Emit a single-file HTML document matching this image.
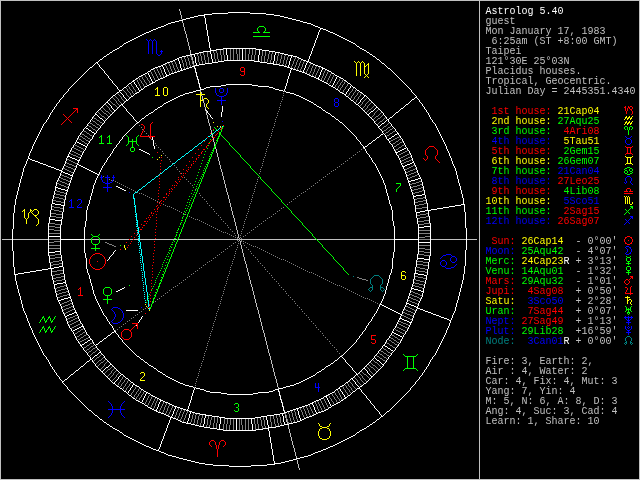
<!DOCTYPE html>
<html><head><meta charset="utf-8"><style>
html,body{margin:0;padding:0;background:#000;width:640px;height:480px;overflow:hidden}
.t{position:absolute;left:0;top:0;width:640px;height:480px;will-change:transform}
.l{position:absolute;left:485.5px;font-family:"Liberation Mono",monospace;font-size:10px;line-height:10px;white-space:pre;height:10px}
</style></head><body>
<svg width="640" height="480" viewBox="0 0 640 480" shape-rendering="crispEdges" style="position:absolute;left:0;top:0">
<path fill="none" stroke="#c0c0c0" stroke-width="1" transform="translate(0,.5)" d="M0 0h640M0 1h1M479 1h1M639 1h1M0 2h1M479 2h1M639 2h1M0 3h1M479 3h1M639 3h1M0 4h1M479 4h1M639 4h1M0 5h1M479 5h1M639 5h1M0 6h1M479 6h1M639 6h1M0 7h1M479 7h1M639 7h1M0 8h1M479 8h1M639 8h1M0 9h1M179 9h1M479 9h1M639 9h1M0 10h1M179 10h1M479 10h1M639 10h1M0 11h1M180 11h1M479 11h1M639 11h1M0 12h1M180 12h1M479 12h1M639 12h1M0 13h1M180 13h1M479 13h1M639 13h1M0 14h1M180 14h1M479 14h1M639 14h1M0 15h1M181 15h1M479 15h1M639 15h1M0 16h1M181 16h1M479 16h1M639 16h1M0 17h1M181 17h1M479 17h1M639 17h1M0 18h1M181 18h1M479 18h1M639 18h1M0 19h1M182 19h1M479 19h1M639 19h1M0 20h1M479 20h1M639 20h1M0 21h1M182 21h1M479 21h1M639 21h1M0 22h1M182 22h1M479 22h1M639 22h1M0 23h1M183 23h1M479 23h1M639 23h1M0 24h1M183 24h1M479 24h1M639 24h1M0 25h1M183 25h1M479 25h1M639 25h1M0 26h1M183 26h1M479 26h1M639 26h1M0 27h1M184 27h1M479 27h1M639 27h1M0 28h1M184 28h1M479 28h1M639 28h1M0 29h1M184 29h1M479 29h1M639 29h1M0 30h1M184 30h1M479 30h1M639 30h1M0 31h1M185 31h1M479 31h1M639 31h1M0 32h1M185 32h1M479 32h1M639 32h1M0 33h1M185 33h1M479 33h1M639 33h1M0 34h1M186 34h1M479 34h1M639 34h1M0 35h1M186 35h1M479 35h1M639 35h1M0 36h1M186 36h1M479 36h1M639 36h1M0 37h1M186 37h1M479 37h1M639 37h1M0 38h1M187 38h1M479 38h1M639 38h1M0 39h1M187 39h1M479 39h1M639 39h1M0 40h1M187 40h1M479 40h1M639 40h1M0 41h1M187 41h1M479 41h1M639 41h1M0 42h1M188 42h1M479 42h1M639 42h1M0 43h1M188 43h1M479 43h1M639 43h1M0 44h1M188 44h1M479 44h1M639 44h1M0 45h1M188 45h1M479 45h1M639 45h1M0 46h1M189 46h1M479 46h1M639 46h1M0 47h1M189 47h1M479 47h1M639 47h1M0 48h1M189 48h1M479 48h1M639 48h1M0 49h1M189 49h1M479 49h1M639 49h1M0 50h1M190 50h1M479 50h1M639 50h1M0 51h1M190 51h1M479 51h1M639 51h1M0 52h1M190 52h1M479 52h1M639 52h1M0 53h1M190 53h1M479 53h1M639 53h1M0 54h1M479 54h1M639 54h1M0 55h1M191 55h1M479 55h1M639 55h1M0 56h1M191 56h1M479 56h1M639 56h1M0 57h1M192 57h1M479 57h1M639 57h1M0 58h1M192 58h1M479 58h1M639 58h1M0 59h1M192 59h1M479 59h1M639 59h1M0 60h1M479 60h1M639 60h1M0 61h1M193 61h1M479 61h1M639 61h1M0 62h1M193 62h1M479 62h1M639 62h1M0 63h1M193 63h1M479 63h1M639 63h1M0 64h1M479 64h1M639 64h1M0 65h1M194 65h1M479 65h1M639 65h1M0 66h1M479 66h1M639 66h1M0 67h1M479 67h1M639 67h1M0 68h1M194 68h1M479 68h1M639 68h1M0 69h1M479 69h1M639 69h1M0 70h1M479 70h1M639 70h1M0 71h1M479 71h1M639 71h1M0 72h1M195 72h1M479 72h1M639 72h1M0 73h1M479 73h1M639 73h1M0 74h1M479 74h1M639 74h1M0 75h1M479 75h1M639 75h1M0 76h1M196 76h1M479 76h1M639 76h1M0 77h1M479 77h1M639 77h1M0 78h1M479 78h1M639 78h1M0 79h1M197 79h1M479 79h1M639 79h1M0 80h1M479 80h1M639 80h1M0 81h1M479 81h1M639 81h1M0 82h1M479 82h1M639 82h1M0 83h1M198 83h1M479 83h1M639 83h1M0 84h1M479 84h1M639 84h1M0 85h1M479 85h1M639 85h1M0 86h1M479 86h1M639 86h1M0 87h1M199 87h1M479 87h1M639 87h1M0 88h1M479 88h1M639 88h1M0 89h1M479 89h1M639 89h1M0 90h1M200 90h1M479 90h1M639 90h1M0 91h1M200 91h1M479 91h1M639 91h1M0 92h1M201 92h1M479 92h1M639 92h1M0 93h1M201 93h1M479 93h1M639 93h1M0 94h1M479 94h1M639 94h1M0 95h1M201 95h1M479 95h1M639 95h1M0 96h1M202 96h1M479 96h1M639 96h1M0 97h1M202 97h1M479 97h1M639 97h1M0 98h1M202 98h1M479 98h1M639 98h1M0 99h1M202 99h1M479 99h1M639 99h1M0 100h1M203 100h1M479 100h1M639 100h1M0 101h1M203 101h1M479 101h1M639 101h1M0 102h1M203 102h1M479 102h1M639 102h1M0 103h1M204 103h1M479 103h1M639 103h1M0 104h1M204 104h1M479 104h1M639 104h1M0 105h1M204 105h1M479 105h1M639 105h1M0 106h1M204 106h1M479 106h1M639 106h1M0 107h1M205 107h1M479 107h1M639 107h1M0 108h1M205 108h1M479 108h1M639 108h1M0 109h1M479 109h1M639 109h1M0 110h1M205 110h1M479 110h1M639 110h1M0 111h1M206 111h1M479 111h1M639 111h1M0 112h1M206 112h1M479 112h1M639 112h1M0 113h1M206 113h1M479 113h1M639 113h1M0 114h1M206 114h1M479 114h1M639 114h1M0 115h1M207 115h1M479 115h1M639 115h1M0 116h1M207 116h1M479 116h1M639 116h1M0 117h1M207 117h1M479 117h1M639 117h1M0 118h1M207 118h1M479 118h1M639 118h1M0 119h1M208 119h1M479 119h1M639 119h1M0 120h1M208 120h1M479 120h1M639 120h1M0 121h1M208 121h1M479 121h1M639 121h1M0 122h1M208 122h1M479 122h1M639 122h1M0 123h1M209 123h1M479 123h1M639 123h1M0 124h1M209 124h1M479 124h1M639 124h1M0 125h1M209 125h1M479 125h1M639 125h1M0 126h1M210 126h1M479 126h1M639 126h1M0 127h1M210 127h1M479 127h1M639 127h1M0 128h1M210 128h1M479 128h1M639 128h1M0 129h1M210 129h1M479 129h1M639 129h1M0 130h1M211 130h1M479 130h1M639 130h1M0 131h1M211 131h1M479 131h1M639 131h1M0 132h1M211 132h1M479 132h1M639 132h1M0 133h1M211 133h1M479 133h1M639 133h1M0 134h1M212 134h1M479 134h1M639 134h1M0 135h1M212 135h1M479 135h1M639 135h1M0 136h1M212 136h1M479 136h1M639 136h1M0 137h1M212 137h1M479 137h1M639 137h1M0 138h1M213 138h1M479 138h1M639 138h1M0 139h1M213 139h1M479 139h1M639 139h1M0 140h1M213 140h1M479 140h1M639 140h1M0 141h1M213 141h1M479 141h1M639 141h1M0 142h1M214 142h1M479 142h1M639 142h1M0 143h1M214 143h1M479 143h1M639 143h1M0 144h1M214 144h1M479 144h1M639 144h1M0 145h1M214 145h1M479 145h1M639 145h1M0 146h1M479 146h1M639 146h1M0 147h1M215 147h1M479 147h1M639 147h1M0 148h1M215 148h1M479 148h1M639 148h1M0 149h1M216 149h1M479 149h1M639 149h1M0 150h1M216 150h1M479 150h1M639 150h1M0 151h1M216 151h1M479 151h1M639 151h1M0 152h1M216 152h1M479 152h1M639 152h1M0 153h1M217 153h1M479 153h1M639 153h1M0 154h1M217 154h1M479 154h1M639 154h1M0 155h1M217 155h1M479 155h1M639 155h1M0 156h1M217 156h1M479 156h1M639 156h1M0 157h1M218 157h1M479 157h1M639 157h1M0 158h1M218 158h1M479 158h1M639 158h1M0 159h1M218 159h1M479 159h1M639 159h1M0 160h1M218 160h1M479 160h1M639 160h1M0 161h1M219 161h1M479 161h1M639 161h1M0 162h1M219 162h1M479 162h1M639 162h1M0 163h1M219 163h1M479 163h1M639 163h1M0 164h1M219 164h1M479 164h1M639 164h1M0 165h1M220 165h1M479 165h1M639 165h1M0 166h1M220 166h1M479 166h1M639 166h1M0 167h1M220 167h1M479 167h1M639 167h1M0 168h1M220 168h1M479 168h1M639 168h1M0 169h1M221 169h1M479 169h1M639 169h1M0 170h1M221 170h1M479 170h1M639 170h1M0 171h1M221 171h1M479 171h1M639 171h1M0 172h1M222 172h1M479 172h1M639 172h1M0 173h1M222 173h1M479 173h1M639 173h1M0 174h1M222 174h1M479 174h1M639 174h1M0 175h1M222 175h1M479 175h1M639 175h1M0 176h1M223 176h1M479 176h1M639 176h1M0 177h1M223 177h1M479 177h1M639 177h1M0 178h1M223 178h1M479 178h1M639 178h1M0 179h1M223 179h1M479 179h1M639 179h1M0 180h1M224 180h1M479 180h1M639 180h1M0 181h1M224 181h1M479 181h1M639 181h1M0 182h1M224 182h1M479 182h1M639 182h1M0 183h1M224 183h1M479 183h1M639 183h1M0 184h1M225 184h1M479 184h1M639 184h1M0 185h1M225 185h1M479 185h1M639 185h1M0 186h1M225 186h1M479 186h1M639 186h1M0 187h1M225 187h1M479 187h1M639 187h1M0 188h1M226 188h1M479 188h1M639 188h1M0 189h1M226 189h1M479 189h1M639 189h1M0 190h1M226 190h1M479 190h1M639 190h1M0 191h1M226 191h1M479 191h1M639 191h1M0 192h1M227 192h1M479 192h1M639 192h1M0 193h1M227 193h1M479 193h1M639 193h1M0 194h1M227 194h1M479 194h1M639 194h1M0 195h1M228 195h1M479 195h1M639 195h1M0 196h1M228 196h1M479 196h1M639 196h1M0 197h1M228 197h1M479 197h1M639 197h1M0 198h1M228 198h1M479 198h1M639 198h1M0 199h1M229 199h1M479 199h1M639 199h1M0 200h1M229 200h1M479 200h1M639 200h1M0 201h1M229 201h1M479 201h1M639 201h1M0 202h1M229 202h1M479 202h1M639 202h1M0 203h1M230 203h1M479 203h1M639 203h1M0 204h1M230 204h1M479 204h1M639 204h1M0 205h1M230 205h1M479 205h1M639 205h1M0 206h1M230 206h1M479 206h1M639 206h1M0 207h1M231 207h1M479 207h1M639 207h1M0 208h1M231 208h1M479 208h1M639 208h1M0 209h1M231 209h1M479 209h1M639 209h1M0 210h1M231 210h1M479 210h1M639 210h1M0 211h1M232 211h1M479 211h1M639 211h1M0 212h1M232 212h1M479 212h1M639 212h1M0 213h1M232 213h1M479 213h1M639 213h1M0 214h1M232 214h1M479 214h1M639 214h1M0 215h1M233 215h1M479 215h1M639 215h1M0 216h1M233 216h1M479 216h1M639 216h1M0 217h1M233 217h1M479 217h1M639 217h1M0 218h1M234 218h1M479 218h1M639 218h1M0 219h1M234 219h1M479 219h1M639 219h1M0 220h1M234 220h1M479 220h1M639 220h1M0 221h1M234 221h1M479 221h1M639 221h1M0 222h1M235 222h1M479 222h1M639 222h1M0 223h1M235 223h1M479 223h1M639 223h1M0 224h1M235 224h1M479 224h1M639 224h1M0 225h1M235 225h1M479 225h1M639 225h1M0 226h1M236 226h1M479 226h1M639 226h1M0 227h1M236 227h1M479 227h1M639 227h1M0 228h1M236 228h1M479 228h1M639 228h1M0 229h1M236 229h1M479 229h1M639 229h1M0 230h1M237 230h1M479 230h1M639 230h1M0 231h1M237 231h1M479 231h1M639 231h1M0 232h1M237 232h1M479 232h1M639 232h1M0 233h1M237 233h1M479 233h1M639 233h1M0 234h1M238 234h1M479 234h1M639 234h1M0 235h1M238 235h1M479 235h1M639 235h1M0 236h1M238 236h1M479 236h1M639 236h1M0 237h1M238 237h1M479 237h1M639 237h1M0 238h1M239 238h1M479 238h1M639 238h1M0 239h1M2 239h10M13 239h35M85 239h6M92 239h7M100 239h29M130 239h3M134 239h5M140 239h37M178 239h61M240 239h76M317 239h77M431 239h35M467 239h10M479 239h1M639 239h1M0 240h1M239 240h1M479 240h1M639 240h1M0 241h1M240 241h1M479 241h1M639 241h1M0 242h1M240 242h1M479 242h1M639 242h1M0 243h1M240 243h1M479 243h1M639 243h1M0 244h1M240 244h1M479 244h1M639 244h1M0 245h1M241 245h1M479 245h1M639 245h1M0 246h1M241 246h1M479 246h1M639 246h1M0 247h1M241 247h1M479 247h1M639 247h1M0 248h1M241 248h1M479 248h1M639 248h1M0 249h1M242 249h1M479 249h1M639 249h1M0 250h1M242 250h1M479 250h1M639 250h1M0 251h1M242 251h1M479 251h1M639 251h1M0 252h1M242 252h1M479 252h1M639 252h1M0 253h1M243 253h1M479 253h1M639 253h1M0 254h1M243 254h1M479 254h1M639 254h1M0 255h1M243 255h1M479 255h1M639 255h1M0 256h1M243 256h1M479 256h1M639 256h1M0 257h1M244 257h1M479 257h1M639 257h1M0 258h1M244 258h1M479 258h1M639 258h1M0 259h1M244 259h1M479 259h1M639 259h1M0 260h1M244 260h1M479 260h1M639 260h1M0 261h1M245 261h1M479 261h1M639 261h1M0 262h1M245 262h1M479 262h1M639 262h1M0 263h1M245 263h1M479 263h1M639 263h1M0 264h1M246 264h1M479 264h1M639 264h1M0 265h1M246 265h1M479 265h1M639 265h1M0 266h1M246 266h1M479 266h1M639 266h1M0 267h1M246 267h1M479 267h1M639 267h1M0 268h1M247 268h1M479 268h1M639 268h1M0 269h1M247 269h1M479 269h1M639 269h1M0 270h1M247 270h1M479 270h1M639 270h1M0 271h1M247 271h1M479 271h1M639 271h1M0 272h1M248 272h1M479 272h1M639 272h1M0 273h1M248 273h1M479 273h1M639 273h1M0 274h1M248 274h1M479 274h1M639 274h1M0 275h1M248 275h1M479 275h1M639 275h1M0 276h1M249 276h1M479 276h1M639 276h1M0 277h1M249 277h1M479 277h1M639 277h1M0 278h1M249 278h1M479 278h1M639 278h1M0 279h1M249 279h1M479 279h1M639 279h1M0 280h1M250 280h1M479 280h1M639 280h1M0 281h1M250 281h1M479 281h1M639 281h1M0 282h1M250 282h1M479 282h1M639 282h1M0 283h1M250 283h1M479 283h1M639 283h1M0 284h1M251 284h1M479 284h1M639 284h1M0 285h1M251 285h1M479 285h1M639 285h1M0 286h1M251 286h1M479 286h1M639 286h1M0 287h1M252 287h1M479 287h1M639 287h1M0 288h1M252 288h1M479 288h1M639 288h1M0 289h1M252 289h1M479 289h1M639 289h1M0 290h1M252 290h1M479 290h1M639 290h1M0 291h1M253 291h1M479 291h1M639 291h1M0 292h1M253 292h1M479 292h1M639 292h1M0 293h1M253 293h1M479 293h1M639 293h1M0 294h1M253 294h1M479 294h1M639 294h1M0 295h1M254 295h1M479 295h1M639 295h1M0 296h1M254 296h1M479 296h1M639 296h1M0 297h1M254 297h1M479 297h1M639 297h1M0 298h1M254 298h1M479 298h1M639 298h1M0 299h1M255 299h1M479 299h1M639 299h1M0 300h1M255 300h1M479 300h1M639 300h1M0 301h1M255 301h1M479 301h1M639 301h1M0 302h1M255 302h1M479 302h1M639 302h1M0 303h1M256 303h1M479 303h1M639 303h1M0 304h1M256 304h1M479 304h1M639 304h1M0 305h1M256 305h1M479 305h1M639 305h1M0 306h1M256 306h1M479 306h1M639 306h1M0 307h1M257 307h1M479 307h1M639 307h1M0 308h1M257 308h1M479 308h1M639 308h1M0 309h1M257 309h1M479 309h1M639 309h1M0 310h1M258 310h1M479 310h1M639 310h1M0 311h1M258 311h1M479 311h1M639 311h1M0 312h1M258 312h1M479 312h1M639 312h1M0 313h1M258 313h1M479 313h1M639 313h1M0 314h1M259 314h1M479 314h1M639 314h1M0 315h1M259 315h1M479 315h1M639 315h1M0 316h1M259 316h1M479 316h1M639 316h1M0 317h1M259 317h1M479 317h1M639 317h1M0 318h1M260 318h1M479 318h1M639 318h1M0 319h1M260 319h1M479 319h1M639 319h1M0 320h1M260 320h1M479 320h1M639 320h1M0 321h1M260 321h1M479 321h1M639 321h1M0 322h1M261 322h1M479 322h1M639 322h1M0 323h1M261 323h1M479 323h1M639 323h1M0 324h1M261 324h1M479 324h1M639 324h1M0 325h1M261 325h1M479 325h1M639 325h1M0 326h1M262 326h1M479 326h1M639 326h1M0 327h1M262 327h1M479 327h1M639 327h1M0 328h1M262 328h1M479 328h1M639 328h1M0 329h1M262 329h1M479 329h1M639 329h1M0 330h1M263 330h1M479 330h1M639 330h1M0 331h1M263 331h1M479 331h1M639 331h1M0 332h1M263 332h1M479 332h1M639 332h1M0 333h1M264 333h1M479 333h1M639 333h1M0 334h1M264 334h1M479 334h1M639 334h1M0 335h1M264 335h1M479 335h1M639 335h1M0 336h1M264 336h1M479 336h1M639 336h1M0 337h1M265 337h1M479 337h1M639 337h1M0 338h1M265 338h1M479 338h1M639 338h1M0 339h1M265 339h1M479 339h1M639 339h1M0 340h1M265 340h1M479 340h1M639 340h1M0 341h1M266 341h1M479 341h1M639 341h1M0 342h1M266 342h1M479 342h1M639 342h1M0 343h1M266 343h1M479 343h1M639 343h1M0 344h1M266 344h1M479 344h1M639 344h1M0 345h1M267 345h1M479 345h1M639 345h1M0 346h1M267 346h1M479 346h1M639 346h1M0 347h1M267 347h1M479 347h1M639 347h1M0 348h1M267 348h1M479 348h1M639 348h1M0 349h1M268 349h1M479 349h1M639 349h1M0 350h1M268 350h1M479 350h1M639 350h1M0 351h1M268 351h1M479 351h1M639 351h1M0 352h1M268 352h1M479 352h1M639 352h1M0 353h1M269 353h1M479 353h1M639 353h1M0 354h1M269 354h1M479 354h1M639 354h1M0 355h1M269 355h1M479 355h1M639 355h1M0 356h1M270 356h1M479 356h1M639 356h1M0 357h1M270 357h1M479 357h1M639 357h1M0 358h1M270 358h1M479 358h1M639 358h1M0 359h1M270 359h1M479 359h1M639 359h1M0 360h1M271 360h1M479 360h1M639 360h1M0 361h1M271 361h1M479 361h1M639 361h1M0 362h1M271 362h1M479 362h1M639 362h1M0 363h1M271 363h1M479 363h1M639 363h1M0 364h1M272 364h1M479 364h1M639 364h1M0 365h1M272 365h1M479 365h1M639 365h1M0 366h1M272 366h1M479 366h1M639 366h1M0 367h1M272 367h1M479 367h1M639 367h1M0 368h1M273 368h1M479 368h1M639 368h1M0 369h1M273 369h1M479 369h1M639 369h1M0 370h1M273 370h1M479 370h1M639 370h1M0 371h1M273 371h1M479 371h1M639 371h1M0 372h1M274 372h1M479 372h1M639 372h1M0 373h1M274 373h1M479 373h1M639 373h1M0 374h1M274 374h1M479 374h1M639 374h1M0 375h1M274 375h1M479 375h1M639 375h1M0 376h1M275 376h1M479 376h1M639 376h1M0 377h1M275 377h1M479 377h1M639 377h1M0 378h1M275 378h1M479 378h1M639 378h1M0 379h1M276 379h1M479 379h1M639 379h1M0 380h1M276 380h1M479 380h1M639 380h1M0 381h1M276 381h1M479 381h1M639 381h1M0 382h1M276 382h1M479 382h1M639 382h1M0 383h1M277 383h1M479 383h1M639 383h1M0 384h1M277 384h1M479 384h1M639 384h1M0 385h1M277 385h1M479 385h1M639 385h1M0 386h1M277 386h1M479 386h1M639 386h1M0 387h1M278 387h1M479 387h1M639 387h1M0 388h1M278 388h1M479 388h1M639 388h1M0 389h1M479 389h1M639 389h1M0 390h1M479 390h1M639 390h1M0 391h1M279 391h1M479 391h1M639 391h1M0 392h1M479 392h1M639 392h1M0 393h1M479 393h1M639 393h1M0 394h1M479 394h1M639 394h1M0 395h1M280 395h1M479 395h1M639 395h1M0 396h1M479 396h1M639 396h1M0 397h1M479 397h1M639 397h1M0 398h1M479 398h1M639 398h1M0 399h1M281 399h1M479 399h1M639 399h1M0 400h1M479 400h1M639 400h1M0 401h1M479 401h1M639 401h1M0 402h1M282 402h1M479 402h1M639 402h1M0 403h1M479 403h1M639 403h1M0 404h1M479 404h1M639 404h1M0 405h1M479 405h1M639 405h1M0 406h1M283 406h1M479 406h1M639 406h1M0 407h1M479 407h1M639 407h1M0 408h1M479 408h1M639 408h1M0 409h1M479 409h1M639 409h1M0 410h1M284 410h1M479 410h1M639 410h1M0 411h1M479 411h1M639 411h1M0 412h1M479 412h1M639 412h1M0 413h1M284 413h1M479 413h1M639 413h1M0 414h1M479 414h1M639 414h1M0 415h1M285 415h1M479 415h1M639 415h1M0 416h1M285 416h1M479 416h1M639 416h1M0 417h1M285 417h1M479 417h1M639 417h1M0 418h1M479 418h1M639 418h1M0 419h1M286 419h1M479 419h1M639 419h1M0 420h1M286 420h1M479 420h1M639 420h1M0 421h1M286 421h1M479 421h1M639 421h1M0 422h1M287 422h1M479 422h1M639 422h1M0 423h1M287 423h1M479 423h1M639 423h1M0 424h1M479 424h1M639 424h1M0 425h1M288 425h1M479 425h1M639 425h1M0 426h1M288 426h1M479 426h1M639 426h1M0 427h1M288 427h1M479 427h1M639 427h1M0 428h1M288 428h1M479 428h1M639 428h1M0 429h1M289 429h1M479 429h1M639 429h1M0 430h1M289 430h1M479 430h1M639 430h1M0 431h1M289 431h1M479 431h1M639 431h1M0 432h1M289 432h1M479 432h1M639 432h1M0 433h1M290 433h1M479 433h1M639 433h1M0 434h1M290 434h1M479 434h1M639 434h1M0 435h1M290 435h1M479 435h1M639 435h1M0 436h1M290 436h1M479 436h1M639 436h1M0 437h1M291 437h1M479 437h1M639 437h1M0 438h1M291 438h1M479 438h1M639 438h1M0 439h1M291 439h1M479 439h1M639 439h1M0 440h1M291 440h1M479 440h1M639 440h1M0 441h1M292 441h1M479 441h1M639 441h1M0 442h1M292 442h1M479 442h1M639 442h1M0 443h1M292 443h1M479 443h1M639 443h1M0 444h1M292 444h1M479 444h1M639 444h1M0 445h1M293 445h1M479 445h1M639 445h1M0 446h1M293 446h1M479 446h1M639 446h1M0 447h1M293 447h1M479 447h1M639 447h1M0 448h1M294 448h1M479 448h1M639 448h1M0 449h1M294 449h1M479 449h1M639 449h1M0 450h1M294 450h1M479 450h1M639 450h1M0 451h1M294 451h1M479 451h1M639 451h1M0 452h1M295 452h1M479 452h1M639 452h1M0 453h1M295 453h1M479 453h1M639 453h1M0 454h1M295 454h1M479 454h1M639 454h1M0 455h1M295 455h1M479 455h1M639 455h1M0 456h1M296 456h1M479 456h1M639 456h1M0 457h1M296 457h1M479 457h1M639 457h1M0 458h1M479 458h1M639 458h1M0 459h1M296 459h1M479 459h1M639 459h1M0 460h1M297 460h1M479 460h1M639 460h1M0 461h1M297 461h1M479 461h1M639 461h1M0 462h1M297 462h1M479 462h1M639 462h1M0 463h1M297 463h1M479 463h1M639 463h1M0 464h1M298 464h1M479 464h1M639 464h1M0 465h1M298 465h1M479 465h1M639 465h1M0 466h1M298 466h1M479 466h1M639 466h1M0 467h1M298 467h1M479 467h1M639 467h1M0 468h1M299 468h1M479 468h1M639 468h1M0 469h1M299 469h1M479 469h1M639 469h1M0 470h1M479 470h1M639 470h1M0 471h1M479 471h1M639 471h1M0 472h1M479 472h1M639 472h1M0 473h1M479 473h1M639 473h1M0 474h1M479 474h1M639 474h1M0 475h1M479 475h1M639 475h1M0 476h1M479 476h1M639 476h1M0 477h1M479 477h1M639 477h1M0 478h1M479 478h1M639 478h1M0 479h640"/>
<path fill="none" stroke="#fff" stroke-width="1" transform="translate(0,.5)" d="M228 12h22M212 13h16M250 13h16M204 14h8M266 14h8M198 15h7M274 15h6M194 16h4M204 16h1M280 16h4M190 17h4M204 17h1M284 17h4M186 18h4M205 18h1M288 18h4M183 19h3M205 19h1M292 19h4M179 20h4M205 20h1M296 20h4M175 21h4M205 21h1M300 21h3M171 22h4M205 22h1M303 22h4M168 23h3M205 23h1M307 23h4M166 24h2M206 24h1M311 24h2M164 25h2M206 25h1M313 25h2M161 26h3M206 26h1M315 26h3M158 27h3M206 27h1M318 27h2M156 28h2M206 28h1M320 28h3M153 29h3M206 29h1M320 29h1M323 29h3M151 30h2M207 30h1M319 30h1M326 30h2M149 31h2M207 31h1M319 31h1M328 31h2M146 32h3M207 32h1M318 32h1M330 32h3M144 33h2M207 33h1M318 33h1M333 33h2M142 34h2M207 34h1M318 34h1M335 34h2M140 35h2M207 35h1M317 35h1M337 35h2M138 36h2M208 36h1M317 36h1M339 36h2M136 37h2M208 37h1M317 37h1M341 37h2M134 38h2M208 38h1M316 38h1M343 38h2M132 39h2M208 39h1M316 39h1M345 39h2M130 40h2M208 40h1M315 40h1M347 40h2M128 41h2M208 41h1M315 41h1M349 41h2M126 42h2M209 42h1M315 42h1M351 42h2M124 43h2M209 43h1M314 43h1M353 43h2M123 44h1M209 44h1M314 44h1M355 44h1M122 45h1M209 45h1M314 45h1M356 45h1M120 46h2M209 46h1M313 46h1M357 46h2M119 47h1M209 47h1M313 47h1M359 47h1M117 48h2M210 48h1M223 48h33M312 48h1M360 48h2M115 49h2M210 49h1M216 49h7M226 49h1M242 49h1M256 49h6M312 49h1M362 49h2M113 50h2M210 50h6M226 50h1M242 50h1M259 50h1M262 50h7M312 50h1M364 50h2M112 51h1M203 51h8M226 51h1M242 51h1M259 51h1M269 51h6M311 51h1M366 51h1M110 52h2M199 52h4M210 52h1M226 52h1M242 52h1M259 52h1M275 52h5M311 52h1M367 52h2M109 53h1M195 53h4M210 53h1M226 53h1M242 53h1M259 53h1M275 53h1M280 53h4M311 53h1M369 53h1M107 54h2M190 54h5M211 54h1M226 54h1M242 54h1M259 54h1M275 54h1M284 54h4M310 54h1M370 54h2M106 55h1M186 55h4M194 55h1M211 55h1M227 55h1M242 55h1M258 55h1M274 55h1M288 55h5M310 55h1M372 55h1M104 56h2M182 56h4M194 56h1M211 56h1M227 56h1M242 56h1M258 56h1M274 56h1M291 56h1M293 56h4M309 56h1M373 56h2M103 57h1M179 57h3M195 57h1M211 57h1M227 57h1M242 57h1M258 57h1M274 57h1M291 57h1M297 57h2M309 57h1M375 57h1M102 58h1M177 58h2M195 58h1M211 58h1M227 58h1M242 58h1M258 58h1M274 58h1M290 58h1M299 58h2M309 58h1M376 58h1M100 59h2M175 59h2M178 59h1M195 59h1M212 59h1M227 59h1M242 59h1M258 59h1M274 59h1M290 59h1M301 59h2M308 59h1M377 59h2M99 60h1M173 60h2M178 60h1M195 60h1M212 60h1M224 60h30M258 60h1M274 60h1M290 60h1M303 60h3M308 60h1M379 60h1M98 61h1M170 61h3M179 61h1M195 61h1M212 61h1M218 61h6M254 61h6M273 61h1M289 61h1M306 61h3M380 61h1M96 62h2M167 62h3M179 62h1M195 62h1M212 62h6M260 62h7M273 62h1M289 62h1M307 62h1M309 62h2M381 62h1M95 63h1M97 63h1M165 63h2M179 63h1M196 63h1M205 63h7M267 63h7M289 63h1M306 63h1M311 63h2M382 63h2M94 64h1M98 64h1M163 64h2M180 64h1M196 64h1M199 64h6M273 64h6M289 64h1M306 64h1M313 64h2M384 64h1M93 65h1M99 65h1M161 65h2M180 65h1M195 65h4M279 65h5M288 65h1M305 65h1M315 65h3M385 65h1M92 66h1M99 66h1M158 66h3M162 66h1M180 66h1M192 66h3M284 66h3M288 66h1M305 66h1M318 66h3M386 66h1M90 67h2M100 67h1M155 67h3M163 67h1M180 67h1M189 67h3M194 67h1M287 67h3M305 67h1M321 67h2M387 67h1M89 68h1M101 68h1M153 68h2M163 68h1M181 68h1M186 68h3M195 68h1M290 68h3M304 68h1M322 68h3M388 68h2M88 69h1M102 69h1M151 69h2M164 69h1M181 69h1M183 69h3M195 69h1M291 69h1M293 69h3M304 69h1M322 69h1M325 69h2M390 69h1M87 70h1M103 70h1M150 70h1M164 70h1M180 70h3M195 70h1M290 70h1M296 70h3M303 70h1M321 70h1M327 70h2M391 70h1M86 71h1M104 71h1M148 71h2M164 71h1M177 71h3M195 71h1M290 71h1M299 71h3M303 71h1M321 71h1M329 71h2M392 71h1M85 72h1M104 72h1M147 72h1M165 72h1M174 72h3M196 72h1M290 72h1M302 72h3M320 72h1M331 72h1M393 72h1M84 73h1M105 73h1M145 73h2M148 73h1M165 73h1M171 73h3M196 73h1M289 73h1M305 73h2M320 73h1M332 73h2M394 73h1M83 74h1M106 74h1M143 74h2M148 74h1M166 74h1M169 74h2M196 74h1M289 74h1M307 74h2M320 74h1M334 74h1M395 74h1M82 75h1M107 75h1M141 75h2M149 75h1M166 75h3M196 75h1M289 75h1M309 75h2M319 75h1M335 75h2M396 75h1M81 76h1M108 76h1M139 76h2M149 76h1M165 76h2M197 76h1M288 76h1M311 76h3M319 76h1M337 76h2M397 76h1M80 77h1M108 77h1M138 77h1M150 77h1M163 77h2M197 77h1M288 77h1M314 77h2M318 77h1M336 77h1M339 77h2M398 77h1M79 78h1M109 78h1M136 78h2M150 78h1M160 78h3M197 78h1M288 78h1M316 78h3M336 78h1M341 78h2M399 78h1M78 79h1M110 79h1M135 79h1M151 79h1M158 79h2M198 79h1M287 79h1M318 79h2M335 79h1M343 79h1M400 79h1M77 80h1M111 80h1M133 80h2M151 80h1M156 80h2M198 80h1M287 80h1M320 80h2M335 80h1M344 80h2M401 80h1M76 81h1M112 81h1M132 81h2M152 81h1M155 81h1M198 81h1M287 81h1M322 81h2M334 81h1M346 81h1M402 81h1M75 82h1M112 82h1M131 82h1M134 82h1M152 82h3M198 82h1M287 82h1M324 82h2M334 82h1M347 82h1M403 82h1M74 83h1M113 83h1M129 83h2M134 83h1M151 83h2M199 83h1M286 83h1M326 83h2M333 83h1M348 83h2M404 83h1M73 84h1M114 84h1M128 84h1M135 84h1M149 84h2M199 84h1M226 84h26M286 84h1M328 84h1M333 84h1M350 84h1M405 84h1M72 85h1M115 85h1M127 85h1M136 85h1M147 85h2M199 85h1M221 85h5M252 85h6M286 85h1M329 85h2M332 85h1M351 85h1M406 85h1M71 86h1M116 86h1M126 86h1M136 86h1M145 86h2M199 86h1M210 86h11M258 86h11M285 86h1M331 86h2M350 86h1M352 86h1M407 86h1M70 87h1M117 87h1M124 87h2M137 87h1M144 87h1M200 87h1M206 87h4M269 87h4M285 87h1M333 87h2M350 87h1M353 87h2M408 87h1M69 88h1M117 88h1M123 88h1M138 88h1M143 88h1M200 88h1M204 88h2M273 88h2M285 88h1M335 88h1M349 88h1M355 88h1M409 88h1M68 89h1M118 89h1M122 89h1M138 89h1M141 89h2M200 89h4M275 89h4M284 89h1M336 89h2M348 89h1M356 89h1M410 89h1M68 90h1M119 90h3M139 90h2M196 90h4M279 90h4M284 90h1M338 90h1M348 90h1M357 90h2M411 90h1M67 91h1M119 91h1M139 91h1M193 91h3M283 91h1M285 91h1M339 91h1M347 91h1M359 91h1M411 91h1M66 92h1M117 92h2M120 92h1M137 92h2M189 92h4M286 92h4M340 92h2M346 92h1M360 92h2M412 92h1M65 93h1M116 93h1M121 93h1M135 93h2M185 93h4M290 93h4M342 93h2M346 93h1M362 93h1M413 93h1M64 94h1M115 94h1M122 94h1M134 94h1M183 94h2M294 94h2M344 94h2M363 94h1M414 94h1M63 95h1M113 95h2M123 95h1M133 95h1M180 95h3M296 95h3M345 95h1M364 95h2M415 95h1M63 96h1M112 96h1M123 96h1M131 96h2M178 96h2M299 96h2M346 96h2M364 96h1M366 96h1M416 96h1M62 97h1M111 97h1M124 97h1M130 97h1M176 97h2M301 97h2M348 97h1M363 97h1M367 97h1M415 97h2M61 98h1M110 98h1M125 98h1M129 98h1M174 98h2M303 98h2M349 98h1M362 98h1M368 98h1M414 98h1M417 98h1M60 99h1M109 99h1M126 99h1M128 99h1M172 99h2M305 99h2M350 99h1M361 99h1M369 99h1M412 99h2M418 99h1M59 100h1M108 100h1M126 100h2M170 100h2M307 100h2M351 100h2M360 100h1M370 100h1M411 100h1M419 100h1M59 101h1M107 101h1M125 101h1M168 101h2M309 101h2M353 101h1M360 101h1M371 101h1M410 101h1M419 101h1M58 102h1M106 102h2M124 102h1M166 102h2M311 102h2M354 102h1M359 102h1M372 102h1M409 102h1M420 102h1M57 103h1M105 103h1M108 103h1M123 103h1M164 103h2M313 103h1M355 103h1M358 103h1M373 103h1M408 103h1M421 103h1M56 104h1M104 104h1M109 104h1M121 104h2M163 104h1M314 104h2M356 104h2M374 104h1M406 104h2M422 104h1M56 105h1M103 105h1M110 105h1M120 105h1M122 105h1M162 105h1M316 105h1M358 105h1M375 105h1M405 105h1M422 105h1M55 106h1M102 106h1M111 106h1M119 106h1M123 106h1M160 106h2M222 106h1M317 106h2M359 106h1M376 106h1M404 106h1M423 106h1M54 107h1M101 107h1M111 107h1M118 107h1M124 107h1M158 107h2M222 107h1M319 107h2M360 107h1M376 107h2M403 107h1M424 107h1M54 108h1M100 108h1M112 108h1M117 108h1M125 108h1M157 108h1M222 108h1M321 108h1M361 108h1M375 108h1M378 108h1M401 108h2M424 108h1M53 109h1M99 109h1M113 109h1M116 109h1M126 109h1M155 109h2M205 109h1M222 109h1M322 109h1M362 109h1M374 109h1M379 109h1M400 109h1M425 109h1M52 110h1M98 110h1M114 110h2M126 110h1M154 110h1M206 110h1M222 110h1M323 110h2M363 110h1M373 110h1M380 110h1M399 110h1M426 110h1M52 111h1M97 111h1M114 111h1M127 111h1M153 111h1M207 111h1M222 111h1M325 111h1M364 111h1M371 111h2M381 111h1M398 111h1M426 111h1M51 112h1M96 112h1M113 112h1M128 112h1M151 112h2M207 112h1M221 112h1M326 112h2M365 112h1M370 112h1M382 112h1M396 112h2M427 112h1M50 113h1M95 113h1M112 113h1M129 113h1M149 113h2M208 113h1M221 113h1M328 113h2M366 113h1M369 113h1M383 113h1M395 113h1M428 113h1M50 114h1M95 114h2M111 114h1M130 114h1M148 114h1M209 114h1M221 114h1M330 114h1M367 114h2M383 114h1M394 114h1M428 114h1M49 115h1M94 115h1M97 115h1M110 115h1M131 115h1M146 115h2M210 115h1M221 115h1M331 115h1M368 115h1M384 115h1M393 115h1M429 115h1M49 116h1M93 116h1M98 116h1M109 116h1M132 116h1M145 116h1M210 116h1M221 116h1M332 116h2M369 116h1M385 116h1M392 116h1M429 116h1M48 117h1M92 117h1M99 117h1M108 117h1M133 117h1M144 117h1M211 117h1M334 117h1M370 117h1M386 117h1M390 117h2M430 117h1M48 118h1M92 118h1M100 118h2M107 118h1M133 118h1M142 118h2M212 118h1M335 118h1M371 118h1M386 118h1M389 118h1M430 118h1M47 119h1M91 119h1M102 119h1M106 119h1M134 119h1M141 119h1M336 119h2M372 119h1M387 119h2M431 119h1M46 120h1M90 120h1M103 120h1M105 120h1M135 120h1M140 120h1M338 120h1M373 120h1M386 120h1M388 120h1M432 120h1M46 121h1M90 121h1M104 121h1M136 121h1M139 121h1M339 121h1M374 121h1M385 121h1M388 121h1M432 121h1M45 122h1M89 122h1M104 122h1M137 122h2M340 122h2M374 122h1M384 122h1M389 122h1M433 122h1M44 123h1M88 123h1M103 123h1M136 123h1M342 123h1M375 123h1M382 123h2M390 123h1M434 123h1M43 124h1M87 124h1M102 124h1M135 124h1M343 124h1M376 124h1M381 124h1M391 124h1M435 124h1M43 125h1M87 125h1M101 125h1M134 125h1M344 125h1M377 125h1M380 125h1M391 125h1M435 125h1M42 126h1M86 126h1M100 126h1M133 126h1M345 126h1M378 126h2M392 126h1M436 126h1M42 127h1M85 127h1M100 127h1M132 127h1M346 127h1M378 127h1M393 127h1M436 127h1M41 128h1M84 128h1M86 128h2M99 128h1M131 128h1M347 128h1M379 128h1M394 128h1M437 128h1M41 129h1M83 129h1M88 129h1M98 129h1M130 129h1M348 129h1M380 129h1M395 129h1M437 129h1M40 130h1M83 130h1M89 130h2M97 130h1M129 130h1M349 130h1M381 130h1M395 130h1M438 130h1M40 131h1M82 131h1M91 131h1M96 131h1M128 131h1M350 131h1M382 131h1M396 131h1M438 131h1M39 132h1M81 132h1M92 132h2M96 132h1M127 132h1M351 132h1M382 132h1M397 132h1M439 132h1M39 133h1M80 133h1M94 133h2M126 133h1M352 133h1M383 133h1M397 133h2M439 133h1M38 134h1M80 134h1M94 134h1M125 134h1M353 134h1M381 134h2M384 134h1M395 134h2M398 134h1M440 134h1M38 135h1M79 135h1M93 135h1M124 135h1M354 135h1M380 135h1M385 135h1M394 135h1M399 135h1M440 135h1M37 136h1M78 136h1M93 136h1M123 136h1M355 136h1M379 136h1M385 136h1M392 136h2M400 136h1M441 136h1M37 137h1M78 137h1M92 137h1M122 137h1M152 137h1M356 137h1M377 137h2M386 137h1M391 137h1M400 137h1M441 137h1M36 138h1M77 138h1M92 138h1M122 138h1M152 138h1M356 138h1M376 138h1M386 138h1M389 138h2M401 138h1M442 138h1M36 139h1M77 139h1M91 139h1M121 139h1M152 139h1M357 139h1M375 139h1M387 139h2M402 139h1M442 139h1M35 140h1M76 140h1M90 140h1M120 140h1M153 140h1M358 140h1M373 140h2M388 140h1M402 140h1M443 140h1M35 141h1M76 141h1M89 141h1M119 141h1M153 141h1M359 141h1M372 141h1M389 141h1M403 141h1M443 141h1M34 142h1M75 142h1M77 142h2M89 142h1M119 142h1M153 142h1M360 142h1M371 142h1M389 142h1M403 142h1M444 142h1M34 143h1M75 143h1M79 143h2M88 143h1M118 143h1M153 143h1M360 143h1M369 143h2M390 143h1M404 143h1M444 143h1M33 144h1M74 144h1M81 144h2M87 144h1M117 144h1M153 144h1M361 144h1M368 144h1M391 144h1M404 144h1M445 144h1M33 145h1M73 145h1M83 145h2M87 145h1M116 145h1M153 145h1M362 145h1M367 145h1M392 145h1M405 145h1M445 145h1M32 146h1M73 146h1M85 146h2M116 146h1M154 146h1M363 146h1M365 146h2M392 146h1M405 146h1M446 146h1M32 147h1M72 147h1M86 147h1M115 147h1M154 147h1M363 147h2M393 147h1M406 147h1M446 147h1M32 148h1M71 148h1M85 148h1M114 148h1M154 148h1M364 148h1M393 148h1M404 148h2M407 148h1M446 148h1M31 149h1M71 149h1M85 149h1M113 149h1M139 149h2M365 149h1M394 149h1M402 149h2M407 149h1M447 149h1M31 150h1M70 150h1M84 150h1M113 150h1M141 150h2M365 150h1M394 150h1M400 150h2M408 150h1M447 150h1M30 151h1M70 151h1M83 151h1M112 151h1M143 151h2M366 151h1M395 151h1M398 151h2M409 151h1M448 151h1M30 152h1M69 152h1M83 152h1M112 152h1M145 152h2M366 152h1M395 152h3M409 152h1M448 152h1M29 153h1M69 153h1M82 153h1M111 153h1M147 153h2M367 153h1M396 153h1M410 153h1M449 153h1M29 154h1M68 154h1M82 154h1M110 154h1M149 154h1M368 154h1M396 154h1M410 154h1M449 154h1M29 155h1M68 155h1M81 155h1M110 155h1M369 155h1M397 155h1M411 155h1M449 155h1M28 156h1M67 156h3M81 156h1M109 156h1M369 156h1M398 156h1M411 156h1M450 156h1M28 157h1M67 157h1M70 157h2M80 157h1M108 157h1M370 157h1M398 157h1M411 157h1M450 157h1M28 158h2M66 158h1M72 158h3M80 158h1M107 158h1M371 158h1M399 158h1M412 158h1M451 158h1M27 159h1M30 159h2M66 159h1M75 159h2M79 159h1M107 159h1M371 159h1M399 159h1M412 159h1M451 159h1M27 160h1M32 160h3M66 160h1M77 160h3M106 160h1M372 160h1M400 160h1M412 160h1M451 160h1M26 161h1M35 161h3M65 161h1M78 161h1M106 161h1M372 161h1M400 161h1M413 161h1M452 161h1M26 162h1M38 162h2M65 162h1M78 162h1M105 162h1M373 162h1M400 162h1M412 162h2M452 162h1M26 163h1M40 163h3M65 163h1M77 163h1M104 163h1M374 163h1M401 163h1M410 163h2M414 163h1M452 163h1M25 164h1M43 164h3M64 164h1M77 164h2M104 164h1M375 164h1M401 164h1M407 164h3M414 164h1M453 164h1M25 165h1M46 165h2M64 165h1M76 165h1M79 165h2M103 165h1M375 165h1M402 165h1M405 165h2M415 165h1M453 165h1M24 166h1M48 166h3M63 166h1M76 166h1M81 166h2M102 166h1M376 166h1M402 166h3M415 166h1M454 166h1M24 167h1M51 167h3M63 167h1M76 167h1M83 167h2M102 167h1M376 167h1M403 167h1M416 167h1M454 167h1M23 168h1M54 168h2M62 168h1M75 168h1M85 168h2M101 168h1M377 168h1M403 168h1M416 168h1M455 168h1M23 169h1M56 169h3M62 169h1M75 169h1M87 169h2M101 169h1M377 169h1M404 169h1M416 169h1M455 169h1M23 170h1M59 170h3M74 170h1M89 170h2M100 170h1M378 170h1M404 170h1M417 170h1M455 170h1M23 171h1M61 171h2M74 171h1M91 171h2M100 171h1M378 171h1M405 171h1M417 171h1M456 171h1M22 172h1M61 172h1M63 172h2M73 172h1M93 172h2M99 172h1M379 172h1M405 172h1M417 172h1M456 172h1M22 173h1M60 173h1M65 173h3M73 173h1M95 173h2M99 173h1M379 173h1M405 173h1M418 173h1M456 173h1M22 174h1M60 174h1M68 174h2M72 174h1M97 174h2M380 174h1M406 174h1M418 174h1M456 174h1M22 175h1M60 175h1M70 175h3M98 175h1M380 175h1M406 175h1M419 175h1M457 175h1M21 176h1M59 176h1M72 176h1M97 176h1M381 176h1M406 176h1M419 176h1M457 176h1M21 177h1M59 177h1M71 177h1M97 177h1M381 177h1M407 177h1M420 177h1M457 177h1M21 178h1M58 178h1M71 178h1M96 178h1M382 178h1M407 178h1M418 178h3M457 178h1M20 179h1M58 179h1M71 179h1M96 179h1M382 179h1M407 179h1M415 179h3M421 179h1M458 179h1M20 180h1M57 180h1M70 180h1M95 180h1M383 180h1M408 180h1M411 180h4M421 180h1M458 180h1M20 181h1M57 181h1M70 181h1M95 181h1M383 181h1M408 181h3M421 181h1M458 181h1M20 182h1M56 182h1M70 182h1M95 182h1M383 182h1M408 182h1M422 182h1M458 182h1M19 183h1M56 183h1M69 183h1M94 183h1M384 183h1M409 183h1M422 183h1M459 183h1M19 184h1M56 184h1M69 184h1M94 184h1M384 184h1M409 184h1M422 184h1M459 184h1M19 185h1M56 185h1M69 185h1M93 185h1M385 185h1M409 185h1M422 185h1M459 185h1M19 186h1M55 186h1M68 186h1M93 186h1M116 186h2M385 186h1M410 186h1M423 186h1M460 186h1M18 187h1M55 187h3M68 187h1M93 187h1M118 187h2M385 187h1M410 187h1M423 187h1M460 187h1M18 188h1M55 188h1M58 188h3M68 188h1M93 188h1M120 188h2M385 188h1M410 188h1M423 188h1M460 188h1M18 189h1M55 189h1M61 189h4M67 189h1M92 189h1M122 189h2M386 189h1M411 189h1M423 189h1M460 189h1M18 190h1M55 190h1M65 190h3M92 190h1M124 190h2M386 190h1M411 190h1M424 190h1M461 190h1M17 191h1M54 191h1M67 191h1M92 191h1M386 191h1M411 191h1M424 191h1M461 191h1M17 192h1M54 192h1M66 192h1M92 192h1M386 192h1M412 192h1M424 192h1M461 192h1M17 193h1M54 193h1M66 193h1M91 193h1M387 193h1M412 193h1M424 193h1M461 193h1M17 194h1M54 194h1M66 194h1M91 194h1M387 194h1M412 194h1M422 194h3M462 194h1M16 195h1M53 195h1M65 195h1M91 195h1M387 195h1M413 195h1M416 195h6M425 195h1M462 195h1M16 196h1M53 196h1M65 196h1M90 196h1M388 196h1M413 196h3M425 196h1M462 196h1M16 197h1M53 197h1M65 197h1M90 197h1M388 197h1M413 197h1M425 197h1M462 197h1M16 198h1M53 198h1M65 198h1M90 198h1M388 198h1M413 198h1M425 198h1M463 198h1M15 199h1M52 199h1M65 199h1M90 199h1M388 199h1M414 199h1M426 199h1M463 199h1M15 200h1M52 200h1M64 200h1M89 200h1M389 200h1M414 200h1M426 200h1M463 200h1M15 201h1M52 201h1M64 201h1M89 201h1M389 201h1M414 201h1M426 201h1M463 201h1M15 202h1M52 202h1M64 202h1M89 202h1M389 202h1M414 202h1M426 202h1M463 202h1M15 203h1M52 203h3M64 203h1M89 203h1M389 203h1M414 203h1M427 203h1M463 203h1M15 204h1M51 204h1M55 204h6M64 204h1M88 204h1M390 204h1M414 204h1M427 204h1M461 204h4M14 205h1M51 205h1M61 205h4M88 205h1M390 205h1M415 205h1M427 205h1M455 205h6M464 205h1M14 206h1M51 206h1M63 206h1M87 206h1M391 206h1M415 206h1M427 206h1M449 206h6M464 206h1M14 207h1M51 207h1M63 207h1M87 207h1M391 207h1M415 207h1M427 207h1M443 207h6M464 207h1M14 208h1M51 208h1M63 208h1M87 208h1M391 208h1M415 208h1M427 208h1M437 208h6M464 208h1M14 209h1M51 209h1M63 209h1M87 209h1M391 209h1M415 209h1M427 209h1M431 209h6M464 209h1M14 210h1M50 210h1M63 210h1M86 210h1M392 210h1M415 210h1M425 210h6M464 210h1M14 211h1M50 211h1M63 211h1M86 211h1M392 211h1M415 211h1M420 211h5M428 211h1M464 211h1M14 212h1M50 212h1M62 212h1M86 212h1M392 212h1M416 212h4M428 212h1M465 212h1M13 213h1M50 213h1M62 213h1M86 213h1M392 213h1M416 213h1M428 213h1M465 213h1M13 214h1M50 214h1M62 214h1M86 214h1M392 214h1M416 214h1M428 214h1M465 214h1M13 215h1M50 215h1M62 215h1M86 215h1M392 215h1M416 215h1M428 215h1M465 215h1M13 216h1M50 216h1M62 216h1M86 216h1M392 216h1M416 216h1M429 216h1M465 216h1M13 217h1M49 217h1M62 217h1M86 217h1M392 217h1M416 217h1M429 217h1M465 217h1M13 218h1M49 218h1M62 218h1M86 218h1M392 218h1M417 218h1M429 218h1M465 218h1M13 219h1M49 219h6M61 219h1M86 219h1M392 219h1M417 219h1M429 219h1M465 219h1M13 220h1M49 220h1M55 220h7M86 220h1M392 220h1M417 220h1M429 220h1M465 220h1M13 221h1M49 221h1M61 221h1M85 221h1M393 221h1M417 221h1M429 221h1M465 221h1M13 222h1M49 222h1M61 222h1M85 222h1M393 222h1M417 222h1M429 222h1M465 222h1M13 223h1M48 223h1M61 223h1M85 223h1M393 223h1M417 223h1M430 223h1M465 223h1M13 224h1M48 224h1M61 224h1M85 224h1M393 224h1M418 224h1M430 224h1M465 224h1M13 225h1M48 225h1M60 225h1M85 225h1M393 225h1M418 225h1M430 225h1M465 225h1M13 226h1M48 226h1M60 226h1M85 226h1M394 226h1M418 226h1M424 226h7M465 226h1M13 227h1M48 227h1M60 227h1M84 227h1M394 227h1M418 227h6M430 227h1M465 227h1M13 228h1M48 228h1M60 228h1M84 228h1M394 228h1M418 228h1M430 228h1M466 228h1M12 229h1M48 229h1M60 229h1M84 229h1M394 229h1M418 229h1M430 229h1M466 229h1M12 230h1M48 230h1M60 230h1M84 230h1M394 230h1M418 230h1M430 230h1M466 230h1M12 231h1M48 231h1M60 231h1M84 231h1M394 231h1M418 231h1M430 231h1M466 231h1M12 232h1M48 232h1M60 232h1M84 232h1M394 232h1M418 232h1M430 232h1M466 232h1M12 233h1M48 233h1M60 233h1M84 233h1M394 233h1M418 233h1M430 233h1M466 233h1M12 234h1M48 234h1M60 234h1M84 234h1M394 234h1M418 234h1M430 234h1M466 234h1M12 235h1M48 235h1M60 235h1M84 235h1M394 235h1M418 235h1M430 235h1M466 235h1M12 236h1M48 236h13M84 236h1M394 236h1M418 236h1M430 236h1M466 236h1M12 237h1M48 237h1M60 237h1M84 237h1M394 237h1M418 237h1M430 237h1M466 237h1M12 238h1M48 238h1M60 238h1M84 238h1M394 238h1M418 238h1M430 238h1M466 238h1M12 239h1M48 239h1M60 239h25M394 239h25M430 239h1M466 239h1M12 240h1M48 240h1M60 240h1M84 240h1M394 240h1M418 240h1M430 240h1M466 240h1M12 241h1M48 241h1M60 241h1M84 241h1M394 241h1M418 241h1M430 241h1M466 241h1M12 242h1M48 242h1M60 242h1M84 242h1M394 242h1M418 242h13M466 242h1M12 243h1M48 243h1M60 243h1M84 243h1M394 243h1M418 243h1M430 243h1M466 243h1M12 244h1M48 244h1M60 244h1M84 244h1M394 244h1M418 244h1M430 244h1M466 244h1M12 245h1M48 245h1M60 245h1M84 245h1M394 245h1M418 245h1M430 245h1M466 245h1M12 246h1M48 246h1M60 246h1M84 246h1M394 246h1M418 246h1M430 246h1M466 246h1M12 247h1M48 247h1M60 247h1M84 247h1M394 247h1M418 247h1M430 247h1M466 247h1M12 248h1M48 248h1M60 248h1M84 248h1M394 248h1M418 248h1M430 248h1M466 248h1M12 249h1M48 249h1M60 249h1M84 249h1M394 249h1M418 249h1M430 249h1M466 249h1M12 250h1M48 250h1M60 250h1M84 250h1M115 250h1M394 250h1M418 250h1M430 250h1M465 250h1M13 251h1M48 251h1M55 251h6M84 251h1M114 251h1M394 251h1M418 251h1M430 251h1M465 251h1M13 252h1M48 252h7M60 252h1M84 252h1M113 252h1M393 252h1M418 252h1M430 252h1M465 252h1M13 253h1M48 253h1M60 253h1M85 253h1M113 253h1M393 253h1M418 253h1M430 253h1M465 253h1M13 254h1M48 254h1M60 254h1M85 254h1M112 254h1M393 254h1M417 254h1M430 254h1M465 254h1M13 255h1M48 255h1M61 255h1M85 255h1M111 255h1M393 255h1M417 255h1M430 255h1M465 255h1M13 256h1M49 256h1M61 256h1M85 256h1M110 256h1M393 256h1M417 256h1M429 256h1M465 256h1M13 257h1M49 257h1M61 257h1M85 257h1M109 257h1M393 257h1M417 257h1M429 257h1M465 257h1M13 258h1M49 258h1M61 258h1M86 258h1M109 258h1M392 258h1M417 258h7M429 258h1M465 258h1M13 259h1M49 259h1M61 259h1M86 259h1M108 259h1M392 259h1M417 259h1M424 259h6M465 259h1M13 260h1M49 260h1M61 260h1M86 260h1M107 260h1M392 260h1M416 260h1M429 260h1M465 260h1M13 261h1M49 261h1M62 261h1M86 261h1M392 261h1M416 261h1M429 261h1M465 261h1M13 262h1M49 262h1M62 262h1M86 262h1M392 262h1M416 262h1M428 262h1M465 262h1M13 263h1M50 263h1M62 263h1M86 263h1M392 263h1M416 263h1M428 263h1M465 263h1M13 264h1M50 264h1M62 264h1M86 264h1M392 264h1M416 264h1M428 264h1M465 264h1M13 265h1M50 265h1M62 265h1M86 265h1M392 265h1M416 265h1M428 265h1M465 265h1M13 266h1M50 266h1M59 266h4M86 266h1M392 266h1M416 266h1M428 266h1M464 266h1M14 267h1M50 267h1M54 267h5M63 267h1M86 267h1M392 267h1M415 267h1M428 267h1M464 267h1M14 268h1M48 268h6M63 268h1M86 268h1M392 268h1M415 268h1M428 268h1M464 268h1M14 269h1M42 269h6M51 269h1M63 269h1M87 269h1M391 269h1M415 269h1M427 269h1M464 269h1M14 270h1M36 270h6M51 270h1M63 270h1M87 270h1M391 270h1M415 270h1M427 270h1M464 270h1M14 271h1M30 271h6M51 271h1M63 271h1M87 271h1M391 271h1M415 271h1M427 271h1M464 271h1M14 272h1M24 272h6M51 272h1M63 272h1M87 272h1M391 272h1M415 272h1M427 272h1M464 272h1M14 273h1M18 273h6M51 273h1M63 273h1M88 273h1M390 273h1M414 273h4M427 273h1M464 273h1M14 274h4M51 274h1M64 274h1M88 274h1M390 274h1M414 274h1M418 274h6M427 274h1M463 274h1M15 275h1M51 275h1M64 275h1M89 275h1M389 275h1M414 275h1M424 275h3M463 275h1M15 276h1M52 276h1M64 276h1M89 276h1M389 276h1M414 276h1M426 276h1M463 276h1M15 277h1M52 277h1M64 277h1M89 277h1M389 277h1M414 277h1M426 277h1M463 277h1M15 278h1M52 278h1M64 278h1M89 278h1M389 278h1M414 278h1M426 278h1M463 278h1M15 279h1M52 279h1M64 279h1M90 279h1M388 279h1M413 279h1M426 279h1M463 279h1M15 280h1M53 280h1M65 280h1M90 280h1M388 280h1M413 280h1M425 280h1M462 280h1M16 281h1M53 281h1M65 281h1M90 281h1M388 281h1M413 281h1M425 281h1M462 281h1M16 282h1M53 282h1M63 282h3M90 282h1M388 282h1M413 282h1M425 282h1M462 282h1M16 283h1M53 283h1M57 283h6M65 283h1M91 283h1M387 283h1M413 283h1M425 283h1M462 283h1M16 284h1M54 284h3M66 284h1M91 284h1M387 284h1M412 284h1M424 284h1M461 284h1M17 285h1M54 285h1M66 285h1M91 285h1M387 285h1M412 285h1M424 285h1M461 285h1M17 286h1M54 286h1M66 286h1M92 286h1M386 286h1M412 286h1M424 286h1M461 286h1M17 287h1M54 287h1M67 287h1M92 287h1M124 287h1M386 287h1M411 287h1M424 287h1M461 287h1M17 288h1M54 288h1M67 288h1M92 288h1M122 288h2M386 288h1M411 288h3M423 288h1M460 288h1M18 289h1M55 289h1M67 289h1M92 289h1M120 289h2M386 289h1M411 289h1M414 289h4M423 289h1M460 289h1M18 290h1M55 290h1M68 290h1M93 290h1M118 290h2M385 290h1M410 290h1M418 290h3M423 290h1M460 290h1M18 291h1M55 291h1M68 291h1M93 291h1M116 291h2M385 291h1M410 291h1M421 291h3M460 291h1M18 292h1M55 292h1M68 292h1M93 292h1M385 292h1M410 292h1M423 292h1M459 292h1M19 293h1M56 293h1M69 293h1M93 293h1M385 293h1M409 293h1M422 293h1M459 293h1M19 294h1M56 294h1M69 294h1M94 294h1M384 294h1M409 294h1M422 294h1M459 294h1M19 295h1M56 295h1M69 295h1M94 295h1M384 295h1M409 295h1M422 295h1M459 295h1M20 296h1M56 296h1M70 296h1M95 296h1M383 296h1M408 296h1M422 296h1M458 296h1M20 297h1M57 297h1M68 297h3M95 297h1M383 297h1M408 297h1M421 297h1M458 297h1M20 298h1M57 298h1M64 298h4M70 298h1M95 298h1M383 298h1M408 298h1M421 298h1M458 298h1M20 299h1M57 299h1M61 299h3M71 299h1M96 299h1M382 299h1M407 299h1M420 299h1M458 299h1M21 300h1M58 300h3M71 300h1M96 300h1M382 300h1M407 300h1M420 300h1M457 300h1M21 301h1M58 301h1M71 301h1M97 301h1M381 301h1M407 301h1M419 301h1M457 301h1M21 302h1M59 302h1M72 302h1M97 302h1M381 302h1M406 302h1M419 302h1M457 302h1M21 303h1M59 303h1M72 303h1M98 303h1M380 303h1M406 303h3M418 303h1M456 303h1M22 304h1M60 304h1M72 304h1M98 304h1M380 304h2M406 304h1M409 304h2M418 304h1M456 304h1M22 305h1M60 305h1M73 305h1M99 305h1M379 305h1M382 305h2M405 305h1M411 305h3M418 305h1M456 305h1M22 306h1M61 306h1M73 306h1M99 306h1M379 306h1M384 306h2M405 306h1M414 306h2M417 306h1M456 306h1M22 307h1M61 307h1M73 307h1M100 307h1M378 307h1M386 307h2M404 307h1M416 307h2M455 307h1M23 308h1M61 308h1M74 308h1M100 308h1M378 308h1M388 308h2M404 308h1M417 308h3M455 308h1M23 309h1M62 309h1M74 309h1M101 309h1M377 309h1M390 309h2M403 309h1M416 309h1M420 309h3M455 309h1M23 310h1M62 310h1M75 310h1M101 310h1M126 310h12M377 310h1M392 310h2M403 310h1M416 310h1M423 310h2M455 310h1M24 311h1M62 311h1M75 311h1M102 311h1M376 311h1M394 311h2M402 311h1M415 311h1M425 311h3M454 311h1M24 312h1M63 312h1M74 312h3M102 312h1M376 312h1M396 312h2M402 312h1M415 312h1M428 312h3M454 312h1M25 313h1M63 313h1M72 313h2M76 313h1M103 313h1M375 313h1M398 313h2M402 313h1M414 313h1M431 313h2M453 313h1M25 314h1M64 314h1M69 314h3M77 314h1M103 314h1M374 314h1M400 314h2M414 314h1M433 314h3M453 314h1M26 315h1M64 315h1M67 315h2M77 315h1M104 315h1M374 315h1M401 315h1M413 315h1M436 315h3M452 315h1M26 316h1M65 316h2M78 316h1M105 316h1M142 316h1M373 316h1M400 316h1M413 316h1M439 316h2M452 316h1M26 317h1M65 317h1M78 317h1M106 317h1M141 317h1M372 317h1M400 317h1M413 317h1M441 317h3M452 317h1M27 318h1M66 318h1M78 318h1M106 318h1M141 318h1M372 318h1M399 318h3M412 318h1M444 318h3M451 318h1M27 319h1M66 319h1M79 319h1M107 319h1M140 319h1M371 319h1M399 319h1M402 319h2M412 319h1M447 319h2M451 319h1M27 320h1M66 320h1M79 320h1M107 320h1M139 320h1M371 320h1M398 320h1M404 320h3M412 320h1M449 320h2M28 321h1M67 321h1M80 321h1M108 321h1M139 321h1M370 321h1M398 321h1M407 321h2M411 321h1M450 321h1M28 322h1M67 322h1M80 322h1M109 322h1M138 322h1M369 322h1M397 322h1M409 322h3M450 322h1M29 323h1M67 323h1M81 323h1M109 323h1M368 323h1M397 323h1M410 323h1M449 323h1M29 324h1M68 324h1M82 324h1M110 324h1M368 324h1M396 324h1M410 324h1M449 324h1M29 325h1M68 325h1M82 325h1M111 325h1M136 325h1M367 325h1M396 325h1M409 325h1M449 325h1M30 326h1M69 326h1M81 326h3M112 326h1M366 326h1M395 326h1M409 326h1M448 326h1M30 327h1M69 327h1M79 327h2M83 327h1M112 327h1M366 327h1M395 327h1M408 327h1M448 327h1M31 328h1M70 328h1M77 328h2M84 328h1M113 328h1M365 328h1M394 328h1M408 328h1M447 328h1M31 329h1M71 329h1M75 329h2M84 329h1M113 329h1M365 329h1M393 329h1M407 329h1M447 329h1M32 330h1M71 330h1M73 330h2M85 330h1M114 330h1M364 330h1M393 330h1M407 330h1M446 330h1M32 331h1M72 331h1M85 331h1M114 331h2M363 331h1M392 331h1M406 331h1M446 331h1M32 332h1M73 332h1M86 332h1M112 332h2M115 332h1M362 332h1M392 332h2M405 332h1M446 332h1M33 333h1M73 333h1M86 333h1M111 333h1M116 333h1M362 333h1M391 333h1M394 333h2M405 333h1M445 333h1M33 334h1M74 334h1M87 334h1M110 334h1M117 334h1M361 334h1M391 334h1M396 334h2M404 334h1M445 334h1M34 335h1M74 335h1M88 335h1M108 335h2M118 335h1M360 335h1M390 335h1M398 335h2M403 335h1M444 335h1M34 336h1M75 336h1M89 336h1M107 336h1M118 336h1M359 336h1M389 336h1M400 336h2M403 336h1M444 336h1M35 337h1M75 337h1M89 337h1M106 337h1M119 337h1M359 337h1M389 337h1M402 337h1M443 337h1M35 338h1M76 338h1M90 338h1M104 338h2M120 338h1M358 338h1M388 338h1M402 338h1M443 338h1M36 339h1M76 339h1M90 339h2M103 339h1M121 339h1M357 339h1M387 339h1M401 339h1M442 339h1M36 340h1M77 340h1M88 340h2M92 340h1M102 340h1M122 340h1M356 340h1M386 340h1M401 340h1M442 340h1M37 341h1M78 341h1M87 341h1M92 341h1M100 341h2M122 341h1M356 341h1M386 341h1M400 341h1M441 341h1M37 342h1M78 342h1M85 342h2M93 342h1M99 342h1M123 342h1M355 342h1M385 342h1M400 342h1M441 342h1M38 343h1M79 343h1M84 343h1M93 343h1M98 343h1M124 343h1M354 343h1M385 343h1M399 343h1M440 343h1M38 344h1M80 344h1M82 344h2M94 344h1M96 344h2M125 344h1M353 344h1M384 344h1M398 344h1M440 344h1M39 345h1M80 345h2M95 345h1M126 345h1M352 345h1M383 345h2M398 345h1M439 345h1M39 346h1M81 346h1M96 346h1M127 346h1M351 346h1M382 346h1M385 346h2M397 346h1M439 346h1M40 347h1M82 347h1M96 347h1M128 347h1M350 347h1M382 347h1M387 347h1M396 347h1M438 347h1M40 348h1M83 348h1M97 348h1M129 348h1M349 348h1M381 348h1M388 348h2M395 348h1M438 348h1M41 349h1M83 349h1M98 349h1M130 349h1M348 349h1M380 349h1M390 349h1M395 349h1M437 349h1M41 350h1M84 350h1M99 350h1M131 350h1M347 350h1M379 350h1M391 350h2M394 350h1M437 350h1M42 351h1M85 351h1M100 351h1M132 351h1M346 351h1M378 351h1M393 351h1M436 351h1M42 352h1M86 352h1M99 352h2M133 352h1M345 352h1M378 352h1M392 352h1M436 352h1M43 353h1M87 353h1M98 353h1M101 353h1M134 353h1M344 353h1M377 353h1M391 353h1M435 353h1M43 354h1M87 354h1M97 354h1M102 354h1M135 354h1M343 354h1M376 354h1M391 354h1M435 354h1M44 355h1M88 355h1M95 355h2M103 355h1M136 355h1M342 355h1M375 355h1M390 355h1M434 355h1M45 356h1M89 356h1M94 356h1M104 356h1M137 356h2M340 356h2M374 356h1M389 356h1M433 356h1M46 357h1M90 357h1M93 357h1M104 357h1M139 357h1M339 357h1M342 357h1M374 357h1M388 357h1M432 357h1M46 358h1M90 358h1M92 358h1M105 358h1M140 358h1M338 358h1M343 358h1M373 358h1M375 358h1M388 358h1M432 358h1M47 359h1M90 359h2M106 359h1M141 359h2M337 359h1M344 359h1M372 359h1M376 359h1M387 359h1M431 359h1M48 360h1M89 360h1M92 360h1M107 360h1M143 360h1M335 360h2M345 360h1M371 360h1M377 360h2M386 360h1M430 360h1M48 361h1M87 361h2M92 361h1M108 361h1M144 361h1M334 361h1M345 361h1M370 361h1M379 361h1M386 361h1M430 361h1M49 362h1M86 362h1M93 362h1M109 362h1M145 362h2M333 362h1M346 362h1M369 362h1M380 362h1M385 362h1M429 362h1M49 363h1M85 363h1M94 363h1M110 363h1M147 363h1M331 363h2M347 363h1M368 363h1M381 363h1M384 363h1M429 363h1M50 364h1M84 364h1M95 364h1M110 364h2M148 364h1M330 364h1M348 364h1M367 364h1M382 364h2M428 364h1M50 365h1M83 365h1M95 365h1M109 365h1M112 365h1M149 365h2M328 365h2M349 365h1M366 365h1M383 365h1M428 365h1M51 366h1M81 366h2M96 366h1M108 366h1M113 366h1M151 366h2M326 366h2M350 366h1M365 366h1M382 366h1M427 366h1M52 367h1M80 367h1M97 367h1M106 367h2M114 367h1M153 367h1M325 367h1M351 367h1M364 367h1M381 367h1M426 367h1M52 368h1M79 368h1M98 368h1M105 368h1M115 368h1M154 368h2M324 368h1M352 368h1M363 368h2M380 368h1M426 368h1M53 369h1M78 369h1M99 369h1M104 369h1M116 369h1M156 369h1M322 369h2M352 369h1M362 369h1M365 369h1M379 369h1M425 369h1M54 370h1M76 370h2M100 370h1M103 370h1M117 370h1M157 370h1M321 370h1M353 370h1M361 370h1M366 370h1M378 370h1M424 370h1M54 371h1M75 371h1M101 371h2M118 371h1M158 371h2M319 371h2M354 371h1M360 371h1M367 371h1M377 371h1M424 371h1M55 372h1M74 372h1M102 372h1M119 372h1M160 372h2M317 372h2M355 372h1M359 372h1M367 372h1M376 372h1M423 372h1M56 373h1M73 373h1M103 373h1M120 373h1M162 373h1M316 373h1M356 373h1M358 373h1M368 373h1M375 373h1M422 373h1M56 374h1M71 374h2M104 374h1M121 374h2M163 374h2M315 374h1M356 374h2M369 374h1M374 374h1M422 374h1M57 375h1M70 375h1M105 375h1M120 375h1M123 375h1M165 375h1M313 375h2M355 375h1M370 375h1M373 375h1M421 375h1M58 376h1M69 376h1M106 376h1M119 376h1M124 376h1M166 376h2M311 376h2M354 376h1M371 376h2M420 376h1M59 377h1M68 377h1M107 377h1M118 377h1M125 377h1M168 377h2M309 377h2M353 377h1M371 377h1M419 377h1M59 378h1M67 378h1M108 378h1M118 378h1M126 378h2M170 378h2M307 378h2M351 378h2M370 378h1M419 378h1M60 379h1M65 379h2M109 379h1M117 379h1M128 379h1M172 379h2M305 379h2M350 379h1M352 379h1M369 379h1M418 379h1M61 380h1M64 380h1M110 380h1M116 380h1M129 380h1M174 380h2M303 380h2M349 380h1M353 380h1M368 380h1M417 380h1M62 381h2M111 381h1M115 381h1M130 381h1M176 381h2M301 381h2M348 381h1M354 381h1M367 381h1M416 381h1M62 382h1M112 382h1M114 382h1M131 382h2M178 382h2M299 382h2M346 382h2M355 382h1M366 382h1M415 382h1M63 383h1M113 383h2M133 383h1M180 383h3M296 383h3M345 383h1M355 383h1M364 383h2M415 383h1M64 384h1M115 384h1M133 384h2M183 384h2M294 384h2M344 384h1M356 384h1M363 384h1M414 384h1M65 385h1M116 385h1M132 385h1M135 385h2M185 385h4M290 385h4M342 385h2M357 385h1M362 385h1M413 385h1M66 386h1M117 386h2M132 386h1M137 386h2M189 386h4M286 386h4M340 386h2M358 386h1M360 386h2M412 386h1M67 387h1M119 387h1M131 387h1M139 387h1M193 387h1M195 387h1M283 387h3M339 387h1M359 387h1M411 387h1M67 388h1M120 388h2M130 388h1M140 388h1M194 388h1M196 388h4M279 388h4M338 388h2M357 388h3M410 388h1M68 389h1M122 389h1M130 389h1M141 389h2M194 389h1M200 389h4M275 389h4M336 389h2M340 389h1M356 389h1M360 389h1M410 389h1M69 390h1M123 390h1M129 390h1M143 390h1M193 390h1M204 390h2M273 390h2M278 390h1M335 390h1M340 390h1M355 390h1M361 390h1M409 390h1M70 391h1M124 391h2M128 391h1M144 391h2M193 391h1M206 391h4M269 391h4M278 391h1M334 391h1M341 391h1M353 391h2M361 391h1M408 391h1M71 392h1M126 392h1M128 392h1M146 392h2M193 392h1M210 392h11M258 392h11M279 392h1M332 392h2M342 392h1M352 392h1M362 392h1M407 392h1M72 393h1M127 393h1M146 393h1M148 393h2M192 393h1M221 393h6M253 393h5M279 393h1M330 393h2M342 393h1M351 393h1M363 393h1M406 393h1M73 394h1M128 394h1M145 394h1M150 394h1M192 394h1M227 394h26M279 394h1M328 394h2M343 394h1M350 394h1M364 394h1M405 394h1M74 395h1M129 395h2M145 395h1M151 395h2M192 395h1M279 395h1M326 395h2M344 395h1M348 395h2M365 395h1M404 395h1M75 396h1M131 396h1M144 396h1M153 396h2M191 396h1M280 396h1M324 396h3M344 396h1M347 396h1M366 396h1M403 396h1M76 397h1M132 397h1M144 397h1M155 397h2M191 397h1M280 397h1M323 397h1M326 397h1M345 397h2M366 397h1M402 397h1M77 398h1M133 398h2M143 398h1M157 398h2M191 398h1M280 398h1M321 398h2M327 398h1M344 398h2M367 398h1M401 398h1M78 399h1M135 399h1M143 399h1M159 399h2M191 399h1M280 399h1M319 399h2M327 399h1M343 399h1M368 399h1M400 399h1M79 400h1M136 400h2M142 400h1M160 400h3M190 400h1M281 400h1M316 400h3M328 400h1M341 400h2M369 400h1M399 400h1M80 401h1M138 401h2M142 401h1M160 401h1M163 401h2M190 401h1M281 401h1M314 401h2M328 401h1M340 401h1M370 401h1M398 401h1M81 402h1M140 402h2M159 402h1M165 402h3M190 402h1M281 402h1M312 402h2M329 402h1M338 402h2M370 402h1M397 402h1M82 403h1M142 403h2M159 403h1M168 403h2M189 403h1M282 403h1M310 403h3M329 403h1M336 403h2M371 403h1M396 403h1M83 404h1M144 404h1M158 404h1M170 404h2M189 404h1M282 404h1M308 404h2M312 404h1M330 404h1M334 404h2M372 404h1M395 404h1M84 405h1M145 405h2M158 405h1M172 405h2M189 405h1M282 405h1M305 405h3M313 405h1M330 405h1M332 405h2M373 405h1M394 405h1M85 406h1M147 406h1M158 406h1M174 406h3M188 406h1M282 406h1M302 406h3M313 406h1M331 406h1M374 406h1M393 406h1M86 407h1M148 407h2M157 407h1M175 407h1M177 407h3M188 407h1M283 407h1M299 407h3M314 407h1M329 407h2M374 407h1M392 407h1M87 408h1M150 408h2M157 408h1M175 408h1M180 408h3M188 408h1M283 408h1M296 408h3M314 408h1M328 408h1M375 408h1M391 408h1M88 409h1M152 409h2M156 409h1M174 409h1M183 409h3M187 409h1M283 409h1M293 409h3M297 409h1M314 409h1M326 409h2M376 409h1M390 409h1M89 410h2M154 410h3M174 410h1M186 410h3M283 410h1M290 410h3M297 410h1M315 410h1M324 410h2M377 410h1M389 410h1M91 411h1M156 411h2M173 411h1M189 411h3M284 411h1M287 411h3M298 411h1M315 411h1M321 411h3M378 411h1M387 411h2M92 412h1M158 412h3M173 412h1M190 412h1M192 412h3M284 412h3M298 412h1M316 412h1M318 412h3M379 412h1M386 412h1M93 413h1M161 413h3M173 413h1M190 413h1M195 413h5M280 413h4M298 413h1M316 413h2M379 413h1M385 413h1M94 414h1M164 414h2M172 414h1M189 414h1M200 414h6M274 414h6M282 414h1M298 414h1M314 414h2M380 414h1M384 414h1M95 415h2M166 415h2M172 415h1M189 415h1M205 415h7M267 415h7M282 415h1M299 415h1M312 415h2M381 415h1M383 415h1M97 416h1M168 416h2M171 416h1M189 416h1M205 416h1M212 416h7M261 416h6M283 416h1M299 416h1M309 416h3M381 416h2M98 417h1M170 417h3M189 417h1M205 417h1M219 417h6M255 417h6M266 417h1M283 417h1M299 417h1M306 417h3M380 417h1M99 418h1M170 418h1M173 418h3M188 418h1M204 418h1M220 418h1M225 418h30M266 418h1M283 418h1M300 418h1M304 418h2M379 418h1M100 419h2M170 419h1M176 419h2M188 419h1M204 419h1M220 419h1M236 419h1M251 419h1M266 419h1M283 419h1M300 419h1M302 419h2M377 419h2M102 420h1M169 420h1M178 420h2M188 420h1M204 420h1M220 420h1M236 420h1M251 420h1M267 420h1M283 420h1M300 420h2M376 420h1M103 421h1M169 421h1M180 421h2M187 421h1M204 421h1M220 421h1M236 421h1M251 421h1M267 421h1M283 421h1M297 421h3M375 421h1M104 422h2M169 422h1M182 422h4M187 422h1M204 422h1M220 422h1M236 422h1M251 422h1M267 422h1M284 422h1M293 422h4M373 422h2M106 423h1M168 423h1M186 423h5M204 423h1M220 423h1M236 423h1M251 423h1M267 423h1M284 423h1M289 423h4M372 423h1M107 424h2M168 424h1M191 424h4M203 424h1M219 424h1M236 424h1M252 424h1M267 424h1M284 424h5M370 424h2M109 425h1M167 425h1M195 425h4M203 425h1M219 425h1M236 425h1M252 425h1M268 425h1M280 425h4M369 425h1M110 426h2M167 426h1M199 426h5M219 426h1M236 426h1M252 426h1M268 426h1M276 426h4M367 426h2M112 427h1M167 427h1M204 427h6M219 427h1M236 427h1M252 427h1M268 427h8M366 427h1M113 428h2M166 428h1M210 428h7M219 428h1M236 428h1M252 428h1M263 428h6M364 428h2M115 429h2M166 429h1M217 429h6M236 429h1M252 429h1M256 429h7M268 429h1M362 429h2M117 430h2M166 430h1M223 430h33M268 430h1M360 430h2M119 431h1M165 431h1M269 431h1M359 431h1M120 432h2M165 432h1M269 432h1M357 432h2M122 433h1M164 433h1M269 433h1M356 433h1M123 434h1M164 434h1M269 434h1M355 434h1M124 435h2M164 435h1M269 435h1M353 435h2M126 436h2M163 436h1M269 436h1M351 436h2M128 437h2M163 437h1M270 437h1M349 437h2M130 438h2M163 438h1M270 438h1M347 438h2M132 439h2M162 439h1M270 439h1M345 439h2M134 440h2M162 440h1M270 440h1M343 440h2M136 441h2M161 441h1M270 441h1M341 441h2M138 442h2M161 442h1M270 442h1M339 442h2M140 443h2M161 443h1M271 443h1M337 443h2M142 444h2M160 444h1M271 444h1M335 444h2M144 445h2M160 445h1M271 445h1M333 445h2M146 446h3M160 446h1M271 446h1M330 446h3M149 447h2M159 447h1M271 447h1M328 447h2M151 448h2M159 448h1M271 448h1M326 448h2M153 449h3M158 449h1M272 449h1M323 449h3M156 450h3M272 450h1M321 450h2M159 451h2M272 451h1M318 451h3M161 452h3M272 452h1M315 452h3M164 453h2M272 453h1M313 453h2M166 454h2M272 454h1M311 454h2M168 455h4M273 455h1M308 455h3M172 456h4M273 456h1M304 456h4M176 457h3M273 457h1M300 457h4M179 458h4M273 458h1M296 458h4M183 459h4M273 459h1M293 459h3M187 460h4M273 460h1M289 460h4M191 461h4M274 461h1M285 461h4M195 462h4M274 462h1M281 462h4M199 463h6M274 463h7M205 464h8M267 464h8M213 465h16M251 465h16M229 466h22"/>
<path fill="none" stroke="#808080" stroke-width="1" transform="translate(0,.5)" d="M223 49h1M230 49h1M233 49h1M236 49h1M239 49h1M245 49h1M249 49h1M252 49h1M255 49h1M216 50h1M220 50h1M223 50h1M230 50h1M233 50h1M236 50h1M239 50h1M245 50h1M249 50h1M252 50h1M255 50h1M213 51h1M216 51h1M220 51h1M223 51h1M230 51h1M233 51h1M236 51h1M239 51h1M245 51h1M249 51h1M252 51h1M255 51h1M262 51h1M265 51h1M203 52h1M207 52h1M213 52h1M216 52h1M220 52h1M223 52h1M230 52h1M233 52h1M236 52h1M239 52h1M245 52h1M249 52h1M252 52h1M255 52h1M262 52h1M265 52h1M269 52h1M272 52h1M200 53h1M203 53h1M207 53h1M214 53h1M217 53h1M220 53h1M223 53h1M230 53h1M233 53h1M236 53h1M239 53h1M245 53h1M249 53h1M252 53h1M255 53h1M262 53h1M265 53h1M269 53h1M272 53h1M278 53h1M197 54h1M200 54h1M203 54h1M207 54h1M214 54h1M217 54h1M220 54h1M223 54h1M230 54h1M233 54h1M237 54h1M239 54h1M245 54h1M248 54h1M252 54h1M255 54h1M262 54h1M265 54h1M268 54h1M271 54h1M278 54h1M282 54h1M190 55h1M197 55h1M200 55h1M204 55h1M207 55h1M214 55h1M217 55h1M221 55h1M224 55h1M230 55h1M233 55h1M237 55h1M239 55h1M245 55h1M248 55h1M251 55h1M254 55h1M262 55h1M265 55h1M268 55h1M271 55h1M278 55h1M281 55h1M285 55h1M187 56h1M190 56h1M198 56h1M201 56h1M204 56h1M207 56h1M214 56h1M217 56h1M221 56h1M224 56h1M230 56h1M233 56h1M237 56h1M239 56h1M245 56h1M248 56h1M251 56h1M254 56h1M261 56h1M264 56h1M268 56h1M271 56h1M277 56h1M281 56h1M284 56h1M288 56h1M184 57h1M187 57h1M191 57h1M198 57h1M201 57h1M204 57h1M208 57h1M214 57h1M217 57h1M221 57h1M224 57h1M230 57h1M233 57h1M237 57h1M239 57h1M245 57h1M248 57h1M251 57h1M254 57h1M261 57h1M264 57h1M268 57h1M271 57h1M277 57h1M281 57h1M284 57h1M287 57h1M295 57h1M181 58h1M184 58h1M188 58h1M191 58h1M198 58h1M201 58h1M204 58h1M208 58h1M214 58h1M217 58h1M221 58h1M224 58h1M230 58h1M233 58h1M237 58h1M239 58h1M245 58h1M248 58h1M251 58h1M254 58h1M261 58h1M264 58h1M268 58h1M271 58h1M277 58h1M281 58h1M284 58h1M287 58h1M295 58h1M298 58h1M181 59h1M185 59h1M188 59h1M191 59h1M198 59h1M201 59h1M204 59h1M208 59h1M215 59h1M218 59h1M221 59h1M224 59h1M230 59h1M233 59h1M237 59h1M239 59h1M245 59h1M248 59h1M251 59h1M254 59h1M261 59h1M264 59h1M267 59h1M271 59h1M277 59h1M280 59h1M284 59h1M287 59h1M294 59h1M298 59h1M182 60h1M185 60h1M188 60h1M192 60h1M198 60h1M201 60h1M205 60h1M208 60h1M215 60h1M218 60h1M221 60h1M254 60h1M261 60h1M264 60h1M267 60h1M270 60h1M277 60h1M280 60h1M283 60h1M286 60h1M294 60h1M297 60h1M301 60h1M174 61h1M182 61h1M185 61h1M189 61h1M192 61h1M198 61h1M202 61h1M205 61h1M208 61h1M215 61h1M261 61h1M264 61h1M267 61h1M270 61h1M276 61h1M280 61h1M283 61h1M286 61h1M293 61h1M297 61h1M300 61h1M304 61h1M171 62h1M175 62h1M182 62h1M186 62h1M189 62h1M192 62h1M199 62h1M202 62h1M205 62h1M208 62h1M270 62h1M276 62h1M280 62h1M283 62h1M286 62h1M293 62h1M296 62h1M300 62h1M303 62h1M168 63h1M172 63h1M175 63h1M183 63h1M186 63h1M189 63h1M192 63h1M199 63h1M202 63h1M276 63h1M279 63h1M283 63h1M286 63h1M293 63h1M296 63h1M299 63h1M303 63h1M310 63h1M165 64h1M169 64h1M172 64h1M176 64h1M183 64h1M186 64h1M189 64h1M193 64h1M279 64h1M282 64h1M285 64h1M292 64h1M296 64h1M299 64h1M302 64h1M310 64h1M165 65h1M169 65h1M173 65h1M176 65h1M183 65h1M186 65h1M190 65h1M193 65h1M285 65h1M292 65h1M295 65h1M299 65h1M302 65h1M309 65h1M313 65h1M166 66h1M170 66h1M173 66h1M176 66h1M183 66h1M187 66h1M190 66h1M291 66h1M295 66h1M298 66h1M302 66h1M309 66h1M312 66h1M316 66h1M159 67h1M166 67h1M170 67h1M173 67h1M177 67h1M184 67h1M187 67h1M291 67h1M294 67h1M298 67h1M301 67h1M308 67h1M312 67h1M315 67h1M319 67h1M156 68h1M160 68h1M167 68h1M170 68h1M174 68h1M177 68h1M184 68h1M294 68h1M297 68h1M301 68h1M308 68h1M311 68h1M315 68h1M319 68h1M153 69h1M157 69h1M160 69h1M167 69h1M171 69h1M174 69h1M178 69h1M297 69h1M300 69h1M307 69h1M311 69h1M314 69h1M318 69h1M154 70h1M157 70h1M161 70h1M168 70h1M171 70h1M175 70h1M178 70h1M300 70h1M307 70h1M311 70h1M314 70h1M318 70h1M325 70h1M150 71h1M154 71h1M158 71h1M161 71h1M168 71h1M172 71h1M175 71h1M306 71h1M310 71h1M314 71h1M317 71h1M324 71h1M328 71h1M151 72h1M155 72h1M158 72h1M161 72h1M169 72h1M172 72h1M306 72h1M310 72h1M313 72h1M317 72h1M324 72h1M327 72h1M151 73h1M155 73h1M159 73h1M162 73h1M169 73h1M309 73h1M313 73h1M316 73h1M323 73h1M327 73h1M331 73h1M152 74h1M156 74h1M159 74h1M162 74h1M309 74h1M312 74h1M316 74h1M323 74h1M326 74h1M330 74h1M145 75h1M152 75h1M156 75h1M160 75h1M163 75h1M312 75h1M315 75h1M323 75h1M326 75h1M330 75h1M333 75h1M141 76h1M145 76h1M153 76h1M157 76h1M160 76h1M163 76h1M315 76h1M322 76h1M325 76h1M329 76h1M333 76h1M142 77h1M146 77h1M153 77h1M157 77h1M161 77h1M322 77h1M325 77h1M329 77h1M332 77h1M139 78h1M142 78h1M147 78h1M154 78h1M158 78h1M321 78h1M324 78h1M328 78h1M332 78h1M340 78h1M136 79h1M139 79h1M143 79h1M147 79h1M154 79h1M321 79h1M324 79h1M328 79h1M331 79h1M339 79h1M137 80h1M140 80h1M144 80h1M148 80h1M155 80h1M323 80h1M327 80h1M331 80h1M339 80h1M342 80h1M137 81h1M141 81h1M144 81h1M149 81h1M327 81h1M330 81h1M338 81h1M342 81h1M345 81h1M138 82h1M141 82h1M145 82h1M149 82h1M326 82h1M330 82h1M337 82h1M341 82h1M344 82h1M138 83h1M142 83h1M146 83h1M150 83h1M329 83h1M337 83h1M340 83h1M344 83h1M131 84h1M139 84h1M143 84h1M146 84h1M336 84h1M340 84h1M343 84h1M347 84h1M131 85h1M139 85h1M143 85h1M335 85h1M339 85h1M342 85h1M347 85h1M128 86h1M132 86h1M140 86h1M144 86h1M335 86h1M338 86h1M342 86h1M346 86h1M129 87h1M133 87h1M140 87h1M338 87h1M341 87h1M345 87h1M126 88h1M129 88h1M133 88h1M141 88h1M337 88h1M340 88h1M345 88h1M353 88h1M127 89h1M130 89h1M134 89h1M340 89h1M344 89h1M352 89h1M123 90h1M127 90h1M131 90h1M135 90h1M339 90h1M343 90h1M352 90h1M355 90h1M124 91h1M128 91h1M132 91h1M135 91h1M284 91h1M343 91h1M351 91h1M355 91h1M125 92h1M129 92h1M132 92h1M136 92h1M342 92h1M350 92h1M354 92h1M358 92h1M117 93h1M126 93h1M130 93h1M133 93h1M283 93h1M349 93h1M353 93h1M357 93h1M361 93h1M118 94h1M126 94h1M130 94h1M349 94h1M353 94h1M357 94h1M360 94h1M119 95h1M127 95h1M131 95h1M283 95h1M348 95h1M352 95h1M356 95h1M360 95h1M115 96h1M120 96h1M128 96h1M351 96h1M355 96h1M359 96h1M112 97h1M116 97h1M121 97h1M129 97h1M282 97h1M351 97h1M354 97h1M358 97h1M113 98h1M117 98h1M121 98h1M350 98h1M354 98h1M358 98h1M366 98h1M114 99h1M118 99h1M122 99h1M282 99h1M353 99h1M357 99h1M365 99h1M109 100h1M115 100h1M118 100h1M123 100h1M356 100h1M364 100h1M369 100h1M110 101h1M116 101h1M119 101h1M124 101h1M281 101h1M356 101h1M363 101h1M368 101h1M111 102h1M116 102h1M120 102h1M355 102h1M362 102h1M367 102h1M371 102h1M112 103h1M117 103h1M121 103h1M280 103h1M362 103h1M366 103h1M370 103h1M105 104h1M113 104h2M118 104h1M361 104h1M365 104h1M369 104h1M106 105h1M115 105h1M119 105h1M280 105h1M360 105h1M365 105h1M368 105h1M374 105h1M107 106h1M116 106h1M364 106h1M367 106h1M373 106h1M102 107h1M108 107h1M117 107h1M279 107h1M363 107h1M367 107h1M372 107h1M103 108h1M109 108h1M362 108h1M366 108h1M371 108h1M100 109h1M104 109h1M109 109h1M279 109h1M365 109h1M369 109h2M378 109h1M101 110h1M105 110h1M110 110h1M364 110h1M368 110h1M377 110h1M102 111h1M106 111h2M111 111h1M278 111h1M367 111h1M376 111h1M98 112h1M103 112h1M108 112h1M112 112h1M366 112h1M375 112h1M381 112h1M99 113h1M104 113h2M109 113h1M277 113h1M374 113h1M380 113h1M100 114h1M106 114h1M110 114h1M374 114h1M379 114h1M101 115h1M107 115h1M277 115h1M373 115h1M378 115h1M382 115h1M102 116h2M108 116h1M372 116h1M376 116h2M381 116h1M93 117h1M104 117h1M276 117h1M371 117h1M375 117h1M380 117h1M385 117h1M94 118h2M105 118h1M374 118h1M378 118h2M384 118h1M96 119h1M275 119h1M373 119h1M377 119h1M383 119h1M92 120h1M97 120h2M376 120h1M382 120h1M93 121h2M99 121h1M275 121h1M375 121h1M380 121h2M95 122h1M100 122h2M379 122h1M90 123h2M96 123h1M102 123h1M137 123h1M274 123h1M378 123h1M388 123h1M92 124h1M97 124h2M377 124h1M387 124h1M88 125h1M93 125h2M99 125h1M139 125h1M274 125h1M386 125h1M89 126h2M95 126h1M384 126h2M390 126h1M91 127h1M96 127h2M141 127h1M273 127h1M383 127h1M388 127h2M92 128h1M98 128h1M382 128h1M387 128h1M392 128h1M93 129h2M142 129h1M272 129h1M381 129h1M386 129h1M390 129h2M95 130h1M384 130h2M389 130h1M84 131h2M144 131h1M272 131h1M383 131h1M388 131h1M393 131h2M86 132h1M386 132h2M392 132h1M81 133h1M87 133h2M146 133h1M271 133h1M385 133h1M390 133h2M82 134h2M89 134h1M389 134h1M84 135h1M90 135h2M148 135h1M271 135h1M387 135h2M80 136h2M85 136h2M92 136h1M386 136h1M399 136h1M82 137h1M87 137h1M149 137h1M270 137h1M397 137h2M78 138h1M83 138h2M88 138h2M395 138h2M79 139h2M85 139h1M90 139h1M151 139h1M269 139h1M393 139h2M399 139h2M81 140h1M86 140h2M391 140h2M398 140h1M82 141h2M88 141h1M269 141h1M390 141h1M396 141h2M402 141h1M84 142h1M395 142h1M400 142h2M85 143h2M155 143h1M268 143h1M393 143h2M399 143h1M392 144h1M397 144h2M75 145h2M156 145h1M268 145h1M396 145h1M402 145h2M77 146h2M394 146h2M401 146h1M73 147h1M79 147h2M158 147h1M267 147h1M399 147h2M74 148h2M81 148h2M363 148h1M398 148h1M76 149h2M83 149h1M160 149h1M266 149h1M361 149h1M396 149h2M71 150h1M78 150h2M395 150h1M407 150h1M72 151h2M80 151h2M162 151h1M266 151h1M359 151h1M405 151h2M74 152h2M82 152h1M357 152h1M403 152h2M70 153h1M76 153h2M163 153h1M265 153h1M401 153h2M409 153h1M71 154h2M78 154h2M355 154h1M399 154h2M407 154h2M73 155h3M80 155h1M165 155h1M265 155h1M353 155h1M398 155h1M405 155h2M76 156h2M403 156h2M410 156h1M78 157h2M167 157h1M264 157h1M351 157h1M401 157h2M408 157h2M349 158h1M400 158h1M406 158h2M67 159h2M169 159h1M263 159h1M404 159h2M411 159h1M69 160h2M347 160h1M402 160h2M409 160h2M71 161h2M170 161h1M263 161h1M345 161h1M401 161h1M406 161h3M66 162h1M73 162h2M404 162h2M67 163h2M75 163h2M172 163h1M262 163h1M343 163h1M402 163h2M69 164h3M341 164h1M65 165h1M72 165h2M174 165h1M262 165h1M413 165h2M66 166h2M74 166h2M339 166h1M411 166h2M68 167h3M176 167h1M261 167h1M337 167h1M409 167h2M63 168h2M71 168h2M407 168h2M415 168h1M65 169h2M73 169h2M177 169h1M260 169h1M335 169h1M405 169h2M413 169h2M67 170h2M333 170h1M410 170h3M69 171h2M179 171h1M260 171h1M331 171h1M408 171h2M416 171h1M71 172h2M406 172h2M414 172h2M181 173h1M259 173h1M329 173h1M411 173h3M61 174h1M99 174h1M327 174h1M409 174h2M417 174h1M62 175h2M407 175h2M415 175h2M64 176h3M103 176h1M325 176h1M412 176h3M60 177h1M67 177h2M184 177h1M258 177h1M323 177h1M410 177h2M61 178h2M69 178h2M408 178h2M63 179h3M109 179h1M186 179h1M257 179h1M321 179h1M58 180h2M66 180h2M111 180h1M113 180h1M319 180h1M60 181h2M68 181h2M115 181h1M188 181h1M257 181h1M419 181h2M62 182h3M117 182h1M317 182h1M416 182h3M57 183h2M65 183h2M119 183h1M190 183h1M256 183h1M315 183h1M412 183h4M59 184h2M67 184h2M121 184h1M410 184h2M420 184h2M61 185h3M123 185h1M192 185h1M255 185h1M313 185h1M417 185h3M64 186h2M125 186h1M311 186h1M413 186h4M66 187h2M127 187h1M255 187h1M411 187h2M421 187h2M129 188h1M309 188h1M418 188h3M131 189h1M195 189h1M254 189h1M307 189h1M414 189h4M56 190h1M133 190h1M412 190h2M422 190h2M57 191h3M135 191h1M254 191h1M305 191h1M419 191h3M60 192h4M137 192h1M303 192h1M415 192h4M55 193h1M64 193h2M139 193h1M141 193h1M199 193h1M253 193h1M301 193h1M413 193h2M56 194h4M143 194h1M60 195h4M145 195h1M200 195h1M252 195h1M299 195h1M54 196h1M64 196h1M147 196h1M297 196h1M55 197h4M149 197h1M202 197h1M252 197h1M423 197h2M59 198h4M151 198h1M295 198h1M417 198h6M63 199h2M153 199h1M204 199h1M251 199h1M293 199h1M415 199h2M53 200h3M155 200h1M423 200h3M56 201h5M157 201h1M206 201h1M251 201h1M291 201h1M418 201h5M61 202h3M159 202h1M289 202h1M415 202h3M207 203h1M250 203h1M424 203h3M163 204h1M287 204h1M419 204h5M165 205h1M209 205h1M249 205h1M416 205h3M52 206h2M167 206h1M169 206h1M54 207h6M171 207h1M211 207h1M249 207h1M283 207h1M422 207h5M60 208h3M173 208h1M281 208h1M416 208h6M52 209h2M175 209h1M213 209h1M248 209h1M54 210h5M177 210h1M279 210h1M59 211h3M179 211h1M214 211h1M248 211h1M277 211h1M181 212h1M51 213h5M183 213h1M216 213h1M247 213h1M275 213h1M426 213h2M56 214h6M185 214h1M273 214h1M420 214h6M218 215h1M246 215h1M417 215h3M51 216h5M189 216h1M271 216h1M426 216h3M56 217h6M191 217h1M220 217h1M246 217h1M269 217h1M420 217h6M193 218h1M267 218h1M418 218h2M195 219h1M197 219h1M221 219h1M245 219h1M199 220h1M265 220h1M424 220h5M201 221h1M223 221h1M244 221h1M263 221h1M418 221h6M203 222h1M49 223h6M205 223h1M225 223h1M244 223h1M261 223h1M424 223h6M55 224h6M207 224h1M259 224h1M419 224h5M209 225h1M227 225h1M243 225h1M49 226h6M211 226h1M257 226h1M55 227h5M213 227h1M228 227h1M243 227h1M255 227h1M215 228h1M49 229h5M217 229h1M230 229h1M242 229h1M253 229h1M54 230h6M219 230h1M251 230h1M419 230h11M221 231h1M232 231h1M241 231h1M223 232h1M225 232h1M249 232h1M49 233h11M227 233h1M234 233h1M241 233h1M247 233h1M419 233h11M229 234h1M231 235h1M235 235h1M240 235h1M245 235h1M233 236h1M243 236h1M425 236h5M235 237h1M237 237h1M240 237h1M419 237h6M237 238h1M241 238h1M49 239h11M239 239h1M419 239h11M237 240h1M241 240h1M54 241h6M238 241h1M241 241h1M243 241h1M49 242h5M105 242h2M235 242h1M245 242h1M107 243h2M233 243h1M238 243h1M243 243h1M247 243h1M109 244h3M249 244h1M49 245h11M112 245h2M231 245h1M237 245h1M244 245h1M251 245h1M419 245h11M114 246h2M229 246h1M253 246h1M255 246h1M237 247h1M246 247h1M257 247h1M49 248h11M227 248h1M259 248h1M419 248h6M225 249h1M236 249h1M248 249h1M261 249h1M425 249h5M263 250h1M223 251h1M235 251h1M250 251h1M265 251h1M419 251h5M221 252h1M267 252h1M424 252h6M235 253h1M251 253h1M269 253h1M55 254h5M219 254h1M271 254h1M418 254h6M49 255h6M217 255h1M234 255h1M253 255h1M273 255h1M424 255h6M275 256h1M55 257h6M215 257h1M234 257h1M255 257h1M277 257h1M50 258h5M213 258h1M279 258h1M233 259h1M257 259h1M281 259h1M283 259h1M59 260h2M211 260h1M285 260h1M53 261h6M209 261h1M232 261h1M258 261h1M287 261h1M417 261h6M50 262h3M207 262h1M289 262h1M423 262h5M59 263h3M232 263h1M260 263h1M291 263h1M53 264h6M205 264h1M293 264h1M417 264h6M51 265h2M203 265h1M231 265h1M262 265h1M295 265h1M423 265h5M297 266h1M201 267h1M230 267h1M264 267h1M299 267h1M417 267h3M199 268h1M301 268h1M420 268h5M230 269h1M265 269h1M303 269h1M425 269h2M57 270h6M197 270h1M305 270h1M416 270h3M52 271h5M195 271h1M229 271h1M267 271h1M307 271h1M419 271h6M309 272h1M311 272h1M425 272h2M60 273h3M193 273h1M229 273h1M269 273h1M313 273h1M55 274h5M191 274h1M315 274h1M52 275h3M228 275h1M271 275h1M317 275h1M61 276h3M189 276h1M319 276h1M415 276h3M56 277h5M187 277h1M227 277h1M272 277h1M321 277h1M357 277h2M418 277h5M53 278h3M323 278h1M359 278h3M423 278h3M62 279h2M185 279h1M227 279h1M274 279h1M325 279h1M362 279h4M414 279h2M56 280h6M183 280h1M327 280h1M366 280h2M416 280h4M54 281h2M226 281h1M276 281h1M329 281h1M420 281h4M181 282h1M331 282h1M414 282h1M424 282h1M179 283h1M226 283h1M278 283h1M333 283h1M415 283h4M335 284h1M419 284h4M64 285h2M177 285h1M225 285h1M279 285h1M337 285h1M339 285h1M413 285h2M423 285h1M60 286h4M175 286h1M341 286h1M415 286h4M57 287h3M173 287h1M224 287h1M281 287h1M343 287h1M419 287h3M55 288h2M65 288h2M345 288h1M422 288h1M61 289h4M171 289h1M224 289h1M283 289h1M347 289h1M58 290h3M169 290h1M349 290h1M56 291h2M66 291h2M223 291h1M285 291h1M351 291h1M411 291h2M62 292h4M167 292h1M353 292h1M413 292h2M59 293h3M165 293h1M223 293h1M286 293h1M355 293h1M415 293h3M57 294h2M67 294h2M357 294h1M410 294h2M418 294h2M63 295h4M163 295h1M222 295h1M288 295h1M359 295h1M412 295h2M420 295h2M60 296h3M161 296h1M361 296h1M414 296h3M58 297h2M221 297h1M290 297h1M363 297h1M409 297h2M417 297h2M159 298h1M365 298h1M367 298h1M411 298h2M419 298h2M157 299h1M221 299h1M292 299h1M369 299h1M413 299h3M69 300h2M371 300h1M408 300h2M416 300h2M67 301h2M155 301h1M220 301h1M294 301h1M373 301h1M410 301h2M418 301h1M64 302h3M153 302h1M375 302h1M412 302h3M62 303h2M70 303h2M220 303h1M295 303h1M377 303h1M415 303h2M61 304h1M68 304h2M379 304h1M417 304h1M65 305h3M149 305h1M219 305h1M297 305h1M63 306h2M71 306h2M406 306h2M62 307h1M69 307h2M147 307h1M218 307h1M299 307h1M408 307h2M66 308h3M145 308h1M410 308h2M64 309h2M72 309h2M143 309h1M218 309h1M301 309h1M404 309h2M412 309h2M63 310h1M70 310h2M406 310h2M414 310h2M68 311h2M141 311h1M217 311h1M302 311h1M408 311h3M66 312h2M139 312h1M403 312h2M411 312h2M64 313h2M216 313h1M304 313h1M405 313h2M413 313h1M137 314h1M407 314h3M75 315h2M135 315h1M216 315h1M306 315h1M402 315h2M410 315h2M73 316h2M404 316h2M412 316h1M70 317h3M77 317h1M133 317h1M215 317h1M308 317h1M406 317h2M68 318h2M75 318h2M131 318h1M408 318h2M67 319h1M73 319h2M215 319h1M309 319h1M410 319h2M71 320h2M78 320h1M129 320h1M69 321h2M76 321h2M127 321h1M214 321h1M311 321h1M399 321h2M68 322h1M74 322h2M401 322h2M72 323h2M80 323h1M125 323h1M213 323h1M313 323h1M398 323h1M403 323h3M70 324h2M78 324h2M123 324h1M399 324h2M406 324h2M69 325h1M76 325h2M213 325h1M315 325h1M401 325h2M408 325h1M74 326h2M121 326h1M396 326h1M403 326h2M72 327h2M119 327h1M212 327h1M316 327h1M397 327h2M405 327h2M71 328h1M83 328h1M399 328h2M407 328h1M81 329h2M117 329h1M212 329h1M318 329h1M395 329h1M401 329h2M80 330h1M115 330h1M396 330h2M403 330h2M78 331h2M211 331h1M320 331h1M398 331h2M405 331h1M77 332h1M83 332h2M400 332h2M75 333h2M82 333h1M210 333h1M322 333h1M402 333h2M80 334h2M86 334h1M79 335h1M84 335h2M210 335h1M323 335h1M392 335h2M77 336h2M83 336h1M394 336h1M76 337h1M81 337h2M88 337h1M209 337h1M325 337h1M390 337h1M395 337h2M80 338h1M86 338h2M391 338h2M397 338h1M78 339h2M84 339h2M209 339h1M327 339h1M388 339h1M393 339h1M398 339h2M82 340h2M389 340h2M394 340h2M400 340h1M80 341h2M208 341h1M329 341h1M391 341h1M396 341h1M79 342h1M92 342h1M386 342h1M392 342h2M397 342h2M90 343h2M207 343h1M330 343h1M387 343h2M394 343h1M89 344h1M389 344h1M395 344h2M87 345h2M93 345h1M207 345h1M332 345h1M390 345h2M397 345h1M86 346h1M91 346h2M392 346h1M84 347h2M90 347h1M95 347h1M206 347h1M334 347h1M393 347h2M89 348h1M93 348h2M383 348h1M87 349h2M92 349h1M97 349h1M206 349h1M336 349h1M384 349h2M86 350h1M91 350h1M96 350h1M380 350h1M386 350h1M89 351h2M95 351h1M205 351h1M337 351h1M381 351h2M387 351h1M88 352h1M93 352h2M383 352h1M388 352h2M92 353h1M204 353h1M339 353h1M379 353h1M384 353h2M390 353h1M91 354h1M101 354h1M380 354h2M386 354h1M90 355h1M100 355h1M204 355h1M341 355h1M376 355h1M382 355h1M387 355h2M99 356h1M377 356h2M383 356h1M97 357h2M103 357h1M203 357h1M379 357h1M384 357h2M96 358h1M102 358h1M380 358h2M386 358h1M95 359h1M101 359h1M105 359h1M203 359h1M382 359h1M94 360h1M99 360h2M104 360h1M373 360h1M383 360h2M93 361h1M98 361h1M103 361h1M107 361h1M202 361h1M374 361h1M385 361h1M97 362h1M101 362h2M106 362h1M370 362h1M375 362h2M96 363h1M100 363h1M105 363h1M201 363h1M371 363h1M377 363h1M99 364h1M104 364h1M368 364h1M372 364h1M378 364h1M98 365h1M104 365h1M201 365h1M369 365h1M373 365h2M379 365h1M97 366h1M103 366h1M112 366h1M366 366h1M370 366h1M375 366h1M380 366h1M102 367h1M111 367h1M200 367h1M367 367h1M371 367h2M376 367h1M101 368h1M110 368h1M114 368h1M368 368h1M373 368h1M377 368h1M100 369h1M108 369h2M113 369h1M199 369h1M369 369h1M374 369h1M378 369h1M107 370h1M112 370h1M116 370h1M369 370h1M375 370h1M106 371h1M111 371h1M115 371h1M199 371h1M361 371h1M370 371h1M376 371h1M105 372h1M111 372h1M114 372h1M362 372h1M371 372h1M104 373h1M110 373h1M113 373h1M118 373h1M198 373h1M359 373h1M363 373h1M372 373h1M109 374h1M113 374h1M117 374h1M360 374h1M364 374h2M373 374h1M108 375h1M112 375h1M116 375h1M198 375h1M357 375h1M361 375h1M366 375h1M107 376h1M111 376h1M116 376h1M123 376h1M358 376h1M362 376h1M367 376h1M110 377h1M115 377h1M122 377h1M197 377h1M354 377h1M359 377h1M362 377h1M368 377h1M109 378h1M114 378h1M122 378h1M355 378h1M360 378h1M363 378h1M369 378h1M113 379h1M121 379h1M125 379h1M196 379h1M356 379h1M360 379h1M364 379h1M112 380h1M120 380h1M124 380h1M128 380h1M357 380h1M361 380h1M365 380h1M120 381h1M124 381h1M127 381h1M196 381h1M349 381h1M357 381h1M362 381h1M366 381h1M119 382h1M123 382h1M127 382h1M350 382h1M358 382h1M363 382h1M118 383h1M122 383h1M126 383h1M130 383h1M195 383h1M347 383h1M351 383h1M359 383h1M118 384h1M121 384h1M125 384h1M129 384h1M348 384h1M352 384h1M360 384h1M117 385h1M121 385h1M125 385h1M129 385h1M195 385h1M345 385h1M348 385h1M352 385h1M361 385h1M120 386h1M124 386h1M128 386h1M136 386h1M342 386h1M346 386h1M349 386h1M353 386h1M123 387h1M127 387h1M135 387h1M194 387h1M343 387h1M346 387h1M350 387h1M354 387h1M123 388h1M126 388h1M135 388h1M139 388h1M343 388h1M347 388h1M351 388h1M355 388h1M126 389h1M134 389h1M138 389h1M344 389h1M348 389h1M351 389h1M125 390h1M133 390h1M138 390h1M141 390h1M337 390h1M345 390h1M349 390h1M352 390h1M133 391h1M137 391h1M140 391h1M338 391h1M345 391h1M349 391h1M132 392h1M136 392h1M140 392h1M143 392h1M334 392h1M338 392h1M346 392h1M350 392h1M131 393h1M136 393h1M139 393h1M143 393h1M335 393h1M339 393h1M347 393h1M131 394h1M135 394h1M138 394h1M142 394h1M332 394h1M335 394h1M339 394h1M347 394h1M134 395h1M138 395h1M141 395h1M149 395h1M328 395h1M332 395h1M336 395h1M340 395h1M134 396h1M137 396h1M141 396h1M148 396h1M152 396h1M329 396h1M333 396h1M337 396h1M340 396h1M133 397h1M136 397h1M140 397h1M148 397h1M151 397h1M329 397h1M334 397h1M337 397h1M341 397h1M136 398h1M139 398h1M147 398h1M151 398h1M155 398h1M323 398h1M330 398h1M334 398h1M338 398h1M341 398h1M139 399h1M147 399h1M150 399h1M154 399h1M157 399h1M324 399h1M331 399h1M335 399h1M339 399h1M342 399h1M138 400h1M146 400h1M150 400h1M154 400h1M157 400h1M320 400h1M324 400h1M331 400h1M336 400h1M339 400h1M146 401h1M149 401h1M153 401h1M156 401h1M317 401h1M321 401h1M325 401h1M332 401h1M336 401h1M145 402h1M149 402h1M153 402h1M156 402h1M163 402h1M315 402h1M318 402h1M321 402h1M325 402h1M333 402h1M337 402h1M145 403h1M148 403h1M152 403h1M155 403h1M163 403h1M166 403h1M315 403h1M318 403h1M322 403h1M326 403h1M333 403h1M148 404h1M152 404h1M155 404h1M162 404h1M166 404h1M169 404h1M316 404h1M319 404h1M322 404h1M326 404h1M147 405h1M151 405h1M155 405h1M162 405h1M165 405h1M169 405h1M309 405h1M316 405h1M319 405h1M323 405h1M327 405h1M151 406h1M154 406h1M161 406h1M165 406h1M168 406h1M172 406h1M306 406h1M309 406h1M317 406h1M320 406h1M323 406h1M327 406h1M150 407h1M154 407h1M161 407h1M164 407h1M168 407h1M172 407h1M303 407h1M306 407h1M310 407h1M317 407h1M320 407h1M324 407h1M328 407h1M153 408h1M160 408h1M164 408h1M167 408h1M171 408h1M178 408h1M300 408h1M303 408h1M307 408h1M310 408h1M317 408h1M321 408h1M324 408h1M160 409h1M164 409h1M167 409h1M171 409h1M178 409h1M181 409h1M300 409h1M304 409h1M307 409h1M311 409h1M318 409h1M321 409h1M325 409h1M159 410h1M163 410h1M167 410h1M170 410h1M177 410h1M181 410h1M184 410h1M294 410h1M301 410h1M304 410h1M308 410h1M311 410h1M318 410h1M322 410h1M159 411h1M163 411h1M166 411h1M170 411h1M177 411h1M180 411h1M184 411h1M187 411h1M291 411h1M294 411h1M301 411h1M305 411h1M308 411h1M312 411h1M319 411h1M162 412h1M166 412h1M169 412h1M176 412h1M180 412h1M183 412h1M187 412h1M288 412h1M291 412h1M295 412h1M302 412h1M305 412h1M308 412h1M312 412h1M165 413h1M169 413h1M176 413h1M179 413h1M183 413h1M186 413h1M193 413h1M285 413h1M288 413h1M292 413h1M295 413h1M302 413h1M305 413h1M309 413h1M313 413h1M168 414h1M176 414h1M179 414h1M182 414h1M186 414h1M193 414h1M196 414h1M199 414h1M285 414h1M289 414h1M292 414h1M295 414h1M302 414h1M306 414h1M309 414h1M313 414h1M168 415h1M175 415h1M179 415h1M182 415h1M185 415h1M192 415h1M195 415h1M199 415h1M202 415h1M276 415h1M279 415h1M286 415h1M289 415h1M292 415h1M295 415h1M303 415h1M306 415h1M310 415h1M175 416h1M178 416h1M182 416h1M185 416h1M192 416h1M195 416h1M198 416h1M202 416h1M208 416h1M270 416h1M273 416h1M276 416h1M279 416h1M286 416h1M289 416h1M292 416h1M296 416h1M303 416h1M307 416h1M174 417h1M178 417h1M181 417h1M185 417h1M192 417h1M195 417h1M198 417h1M202 417h1M208 417h1M211 417h1M214 417h1M217 417h1M263 417h1M270 417h1M273 417h1M276 417h1M280 417h1M286 417h1M289 417h1M293 417h1M296 417h1M304 417h1M177 418h1M181 418h1M184 418h1M192 418h1M195 418h1M198 418h1M201 418h1M208 418h1M211 418h1M214 418h1M217 418h1M224 418h1M257 418h1M260 418h1M263 418h1M270 418h1M273 418h1M277 418h1M280 418h1M286 418h1M290 418h1M293 418h1M296 418h1M180 419h1M184 419h1M191 419h1M194 419h1M198 419h1M201 419h1M207 419h1M211 419h1M214 419h1M217 419h1M224 419h1M227 419h1M230 419h1M233 419h1M239 419h1M241 419h1M245 419h1M248 419h1M254 419h1M257 419h1M260 419h1M263 419h1M270 419h1M274 419h1M277 419h1M280 419h1M287 419h1M290 419h1M293 419h1M297 419h1M180 420h1M183 420h1M191 420h1M194 420h1M197 420h1M201 420h1M207 420h1M210 420h1M214 420h1M217 420h1M224 420h1M227 420h1M230 420h1M233 420h1M239 420h1M241 420h1M245 420h1M248 420h1M254 420h1M257 420h1M261 420h1M264 420h1M270 420h1M274 420h1M277 420h1M280 420h1M287 420h1M290 420h1M294 420h1M297 420h1M183 421h1M191 421h1M194 421h1M197 421h1M201 421h1M207 421h1M210 421h1M214 421h1M217 421h1M224 421h1M227 421h1M230 421h1M233 421h1M239 421h1M241 421h1M245 421h1M248 421h1M254 421h1M257 421h1M261 421h1M264 421h1M270 421h1M274 421h1M277 421h1M280 421h1M287 421h1M291 421h1M294 421h1M190 422h1M194 422h1M197 422h1M201 422h1M207 422h1M210 422h1M214 422h1M217 422h1M224 422h1M227 422h1M230 422h1M233 422h1M239 422h1M241 422h1M245 422h1M248 422h1M254 422h1M257 422h1M261 422h1M264 422h1M271 422h1M274 422h1M277 422h1M280 422h1M288 422h1M291 422h1M193 423h1M197 423h1M200 423h1M207 423h1M210 423h1M213 423h1M216 423h1M224 423h1M227 423h1M230 423h1M233 423h1M239 423h1M241 423h1M245 423h1M248 423h1M254 423h1M257 423h1M261 423h1M264 423h1M271 423h1M274 423h1M278 423h1M281 423h1M288 423h1M196 424h1M200 424h1M207 424h1M210 424h1M213 424h1M216 424h1M223 424h1M226 424h1M230 424h1M233 424h1M239 424h1M241 424h1M245 424h1M248 424h1M255 424h1M258 424h1M261 424h1M264 424h1M271 424h1M275 424h1M278 424h1M281 424h1M200 425h1M206 425h1M209 425h1M213 425h1M216 425h1M223 425h1M226 425h1M229 425h1M233 425h1M239 425h1M242 425h1M245 425h1M248 425h1M255 425h1M258 425h1M261 425h1M264 425h1M271 425h1M275 425h1M278 425h1M206 426h1M209 426h1M213 426h1M216 426h1M223 426h1M226 426h1M229 426h1M233 426h1M239 426h1M242 426h1M245 426h1M248 426h1M255 426h1M258 426h1M262 426h1M265 426h1M271 426h1M275 426h1M213 427h1M216 427h1M223 427h1M226 427h1M229 427h1M233 427h1M239 427h1M242 427h1M245 427h1M248 427h1M255 427h1M258 427h1M262 427h1M265 427h1M223 428h1M226 428h1M229 428h1M233 428h1M239 428h1M242 428h1M245 428h1M248 428h1M255 428h1M258 428h1M262 428h1M223 429h1M226 429h1M229 429h1M233 429h1M239 429h1M242 429h1M245 429h1M248 429h1M255 429h1"/>
<path fill="none" stroke="#0f0" stroke-width="1" transform="translate(0,.5)" d="M259 26h5M258 27h1M264 27h1M257 28h1M265 28h1M257 29h1M265 29h1M257 30h1M265 30h1M258 31h1M264 31h1M253 32h7M263 32h7M253 36h17M223 126h1M625 126h2M630 126h2M214 127h1M222 127h1M624 127h1M627 127h1M629 127h1M632 127h1M215 128h1M222 128h1M624 128h1M627 128h1M629 128h1M632 128h1M216 129h1M221 129h1M625 129h1M627 129h1M629 129h1M631 129h1M213 130h1M221 130h1M628 130h1M221 131h1M628 131h1M219 132h2M628 132h1M212 133h1M219 133h2M628 133h1M219 134h2M628 134h1M101 135h1M109 135h1M126 135h1M138 135h1M219 135h1M221 135h1M100 136h2M108 136h2M127 136h1M137 136h1M211 136h1M218 136h2M222 136h1M99 137h1M101 137h1M107 137h1M109 137h1M128 137h1M136 137h1M218 137h1M223 137h1M101 138h1M109 138h1M128 138h1M136 138h1M217 138h2M224 138h1M101 139h1M109 139h1M128 139h1M132 139h1M136 139h1M210 139h1M217 139h1M225 139h1M101 140h1M109 140h1M128 140h1M132 140h1M136 140h1M216 140h2M226 140h1M101 141h1M109 141h1M128 141h9M217 141h1M227 141h1M101 142h1M109 142h1M128 142h1M132 142h1M136 142h1M209 142h1M216 142h1M228 142h1M99 143h5M107 143h5M128 143h1M132 143h1M136 143h1M216 143h1M229 143h1M127 144h1M132 144h1M137 144h1M215 144h1M229 144h1M126 145h1M132 145h1M138 145h1M208 145h1M215 145h1M230 145h1M132 146h1M214 146h2M231 146h1M131 147h3M214 147h1M232 147h1M130 148h1M134 148h1M207 148h1M213 148h2M233 148h1M130 149h1M134 149h1M213 149h1M234 149h1M130 150h1M134 150h1M212 150h2M235 150h1M131 151h3M205 151h1M213 151h1M236 151h1M211 152h2M237 152h1M212 153h1M238 153h1M204 154h1M210 154h2M239 154h1M211 155h1M240 155h1M209 156h1M211 156h1M240 156h1M152 157h1M203 157h1M210 157h1M241 157h1M209 158h2M242 158h1M209 159h1M243 159h1M202 160h1M208 160h2M244 160h1M209 161h1M245 161h1M207 162h2M246 162h1M201 163h1M208 163h1M247 163h1M206 164h2M248 164h1M207 165h1M249 165h1M200 166h1M205 166h1M207 166h1M250 166h1M206 167h1M250 167h1M627 167h3M204 168h1M206 168h1M251 168h1M625 168h2M630 168h2M199 169h1M205 169h1M252 169h1M624 169h1M629 169h1M632 169h1M203 170h1M205 170h1M253 170h1M625 170h2M629 170h1M632 170h1M205 171h1M254 171h1M624 171h1M627 171h1M630 171h2M198 172h1M203 172h2M255 172h1M624 172h1M627 172h1M632 172h1M204 173h1M256 173h1M625 173h2M630 173h2M202 174h2M257 174h1M627 174h3M197 175h1M203 175h1M258 175h1M201 176h1M203 176h1M259 176h1M202 177h1M260 177h1M196 178h1M200 178h1M202 178h1M260 178h1M201 179h1M261 179h1M199 180h1M201 180h1M262 180h1M195 181h1M201 181h1M263 181h1M198 182h1M200 182h1M264 182h1M200 183h1M265 183h1M396 183h5M194 184h1M197 184h1M199 184h1M266 184h1M400 184h1M199 185h1M267 185h1M400 185h1M196 186h1M199 186h1M268 186h1M399 186h1M193 187h1M198 187h1M269 187h1M398 187h1M196 188h1M198 188h1M270 188h1M397 188h1M197 189h1M271 189h1M396 189h1M192 190h1M195 190h1M197 190h1M271 190h1M396 190h1M197 191h1M272 191h1M396 191h1M194 192h1M196 192h1M273 192h1M191 193h1M196 193h1M274 193h1M193 194h1M195 194h1M275 194h1M195 195h1M276 195h1M189 196h1M192 196h1M195 196h1M277 196h1M194 197h1M278 197h1M191 198h1M194 198h1M279 198h1M188 199h1M193 199h1M280 199h1M190 200h1M193 200h1M281 200h1M193 201h1M281 201h1M187 202h1M189 202h1M192 202h1M282 202h1M192 203h1M283 203h1M189 204h1M191 204h1M284 204h1M186 205h1M191 205h1M285 205h1M188 206h1M191 206h1M286 206h1M630 206h3M190 207h1M287 207h1M631 207h2M185 208h1M187 208h1M190 208h1M288 208h1M630 208h1M632 208h1M189 209h1M289 209h1M625 209h1M629 209h1M186 210h1M189 210h1M290 210h1M626 210h1M628 210h1M184 211h1M189 211h1M291 211h1M627 211h1M185 212h1M188 212h1M291 212h1M626 212h1M628 212h1M188 213h1M292 213h1M625 213h1M629 213h1M183 214h2M187 214h1M293 214h1M624 214h1M187 215h1M294 215h1M183 216h1M187 216h1M295 216h1M182 217h1M186 217h1M296 217h1M182 218h1M186 218h1M297 218h1M185 219h1M298 219h1M181 220h2M185 220h1M299 220h1M185 221h1M300 221h1M181 222h1M184 222h1M301 222h1M180 223h1M184 223h1M302 223h1M180 224h1M183 224h1M302 224h1M183 225h1M303 225h1M179 226h1M183 226h1M304 226h1M182 227h1M305 227h1M178 228h1M182 228h1M306 228h1M178 229h1M181 229h1M307 229h1M177 230h1M181 230h1M308 230h1M181 231h1M309 231h1M176 232h2M180 232h1M310 232h1M180 233h1M311 233h1M91 234h1M99 234h1M176 234h1M179 234h1M312 234h1M92 235h1M98 235h1M176 235h1M179 235h1M312 235h1M93 236h5M175 236h1M179 236h1M313 236h1M92 237h1M98 237h1M178 237h1M314 237h1M91 238h1M99 238h1M174 238h2M178 238h1M315 238h1M91 239h1M99 239h1M177 239h1M316 239h1M91 240h1M99 240h1M173 240h1M177 240h1M317 240h1M91 241h1M99 241h1M174 241h1M177 241h1M318 241h1M91 242h1M99 242h1M172 242h1M176 242h1M319 242h1M92 243h1M98 243h1M176 243h1M320 243h1M93 244h5M171 244h2M175 244h1M321 244h1M95 245h1M120 245h1M175 245h1M322 245h1M95 246h1M170 246h1M175 246h1M322 246h1M95 247h1M171 247h1M174 247h1M323 247h1M91 248h9M169 248h1M174 248h1M324 248h1M95 249h1M173 249h1M325 249h1M95 250h1M169 250h2M173 250h1M326 250h1M173 251h1M327 251h1M168 252h1M172 252h1M328 252h1M169 253h1M172 253h1M329 253h1M167 254h1M171 254h1M330 254h1M171 255h1M331 255h1M166 256h1M168 256h1M171 256h1M332 256h1M626 256h1M630 256h1M170 257h1M333 257h1M627 257h3M165 258h1M170 258h1M333 258h1M626 258h1M630 258h1M167 259h1M169 259h1M334 259h1M626 259h1M630 259h1M164 260h1M169 260h1M335 260h1M626 260h1M630 260h1M169 261h1M336 261h1M627 261h3M163 262h1M166 262h1M168 262h1M337 262h1M628 262h1M168 263h1M338 263h1M626 263h5M162 264h1M167 264h1M339 264h1M628 264h1M165 265h1M167 265h1M340 265h1M162 266h1M167 266h1M341 266h1M627 266h3M166 267h1M342 267h1M626 267h1M630 267h1M161 268h1M164 268h1M166 268h1M343 268h1M626 268h1M630 268h1M165 269h1M343 269h1M626 269h1M630 269h1M160 270h1M165 270h1M344 270h1M627 270h3M163 271h1M165 271h1M345 271h1M628 271h1M159 272h1M164 272h1M346 272h1M626 272h5M164 273h1M347 273h1M628 273h1M158 274h1M162 274h2M348 274h1M628 274h1M163 275h1M157 276h1M163 276h1M161 277h2M156 278h1M162 278h1M161 279h1M155 280h1M160 280h2M161 281h1M155 282h1M160 282h1M159 283h2M154 284h1M159 284h1M129 285h1M159 285h1M153 286h1M158 286h2M105 287h5M158 287h1M104 288h1M110 288h1M152 288h1M158 288h1M103 289h1M111 289h1M156 289h2M103 290h1M111 290h1M151 290h1M157 290h1M103 291h1M111 291h1M157 291h1M103 292h1M111 292h1M155 292h2M103 293h1M111 293h1M156 293h1M104 294h1M110 294h1M149 294h1M155 294h1M105 295h5M154 295h2M107 296h1M148 296h1M155 296h1M107 297h1M154 297h1M107 298h1M148 298h1M153 298h2M103 299h9M153 299h1M107 300h1M147 300h1M153 300h1M107 301h1M152 301h2M107 302h1M146 302h1M152 302h1M107 303h1M152 303h1M151 304h1M151 305h1M151 306h1M625 306h1M631 306h1M150 307h1M626 307h1M630 307h1M150 308h1M626 308h1M628 308h1M630 308h1M626 309h5M626 310h1M628 310h1M630 310h1M625 311h1M628 311h1M631 311h1M627 312h3M627 313h1M629 313h1M628 314h1M43 316h1M49 316h1M55 316h1M42 317h2M48 317h2M54 317h1M42 318h1M44 318h1M48 318h1M50 318h1M54 318h1M41 319h1M44 319h1M47 319h1M50 319h1M53 319h1M40 320h1M44 320h1M46 320h1M50 320h1M52 320h1M40 321h1M45 321h2M51 321h2M39 322h1M45 322h1M51 322h1M43 326h1M49 326h1M55 326h1M42 327h2M48 327h2M54 327h1M42 328h1M44 328h1M48 328h1M50 328h1M54 328h1M41 329h1M44 329h1M47 329h1M50 329h1M53 329h1M40 330h1M44 330h1M46 330h1M50 330h1M52 330h1M40 331h1M45 331h2M51 331h2M39 332h1M45 332h1M51 332h1M403 354h1M417 354h1M404 355h1M416 355h1M405 356h11M407 357h1M413 357h1M407 358h1M413 358h1M407 359h1M413 359h1M407 360h1M413 360h1M407 361h1M413 361h1M407 362h1M413 362h1M407 363h1M413 363h1M407 364h1M413 364h1M407 365h1M413 365h1M407 366h1M413 366h1M407 367h1M413 367h1M405 368h11M404 369h1M416 369h1M403 370h1M417 370h1M235 403h3M234 404h1M238 404h1M238 405h1M238 406h1M236 407h2M238 408h1M238 409h1M234 410h1M238 410h1M235 411h3"/>
<path fill="none" stroke="#f00" stroke-width="1" transform="translate(0,.5)" d="M241 67h3M240 68h1M244 68h1M240 69h1M244 69h1M240 70h1M244 70h1M241 71h4M244 72h1M244 73h1M240 74h1M244 74h1M241 75h3M625 106h1M628 106h1M630 106h2M624 107h2M628 107h2M632 107h1M73 108h5M625 108h1M627 108h1M629 108h1M632 108h1M76 109h2M625 109h1M627 109h1M630 109h2M75 110h1M77 110h1M625 110h1M627 110h1M631 110h1M74 111h1M77 111h1M626 111h1M632 111h1M73 112h1M77 112h1M626 112h1M632 112h1M72 113h1M626 113h1M632 113h1M63 114h1M71 114h1M631 114h1M64 115h1M70 115h1M65 116h1M69 116h1M66 117h1M68 117h1M67 118h1M66 119h1M68 119h1M65 120h1M69 120h1M64 121h1M70 121h1M63 122h1M71 122h1M152 122h1M62 123h1M151 123h1M61 124h1M141 124h2M150 124h1M143 125h1M150 125h1M223 125h1M144 126h1M150 126h1M144 127h1M150 127h1M221 127h1M144 128h1M150 128h1M221 128h1M143 129h1M150 129h1M213 129h1M220 129h1M143 130h1M150 130h1M142 131h1M150 131h1M218 131h1M142 132h1M150 132h1M141 133h1M150 133h1M210 133h1M217 133h1M141 134h1M150 134h1M216 134h1M140 135h1M150 135h1M215 135h1M140 136h15M150 137h1M207 137h1M213 137h2M150 138h1M212 139h1M211 140h1M204 141h1M210 141h1M208 143h2M201 145h1M207 145h1M206 146h1M429 146h5M625 146h1M632 146h1M206 147h1M428 147h1M434 147h1M626 147h6M427 148h1M435 148h1M627 148h1M630 148h1M198 149h1M203 149h2M426 149h1M436 149h1M627 149h1M630 149h1M425 150h1M437 150h1M627 150h1M630 150h1M202 151h1M425 151h1M437 151h1M627 151h1M630 151h1M157 152h1M201 152h1M425 152h1M437 152h1M627 152h1M630 152h1M195 153h1M201 153h1M425 153h1M437 153h1M626 153h6M425 154h1M437 154h1M625 154h1M632 154h1M198 155h2M426 155h1M436 155h1M427 156h1M435 156h1M161 157h1M192 157h1M198 157h1M427 157h1M435 157h1M196 158h1M423 158h1M427 158h1M435 158h1M196 159h1M424 159h1M426 159h1M436 159h1M161 160h1M425 160h1M437 160h1M189 161h1M193 161h1M195 161h1M438 161h1M439 162h1M160 163h1M193 163h1M191 164h1M186 165h1M191 165h1M160 166h1M188 167h1M190 167h1M160 169h1M183 169h1M188 169h1M186 170h1M187 171h1M160 172h1M180 173h1M183 173h1M185 173h1M159 175h1M183 175h1M181 176h1M178 177h1M182 177h1M159 178h1M178 179h1M180 179h1M159 181h1M175 181h1M179 181h1M176 182h1M177 183h1M159 184h1M172 185h1M174 185h1M176 185h1M159 187h1M174 187h1M171 188h1M627 188h3M169 189h1M172 189h1M626 189h1M630 189h1M158 190h1M626 190h1M630 190h1M169 191h1M171 191h1M624 191h4M629 191h4M158 193h1M166 193h1M169 193h1M624 193h9M166 194h1M168 195h1M158 196h1M163 197h2M166 197h1M158 199h1M165 199h1M161 200h1M160 201h1M163 201h1M157 202h1M159 203h1M161 203h1M157 205h1M160 205h1M156 206h1M158 207h1M157 208h1M154 209h1M157 209h1M155 211h1M157 211h1M151 212h1M151 213h1M153 213h1M156 214h1M149 215h1M152 215h1M148 217h1M150 217h1M156 217h1M146 218h1M149 219h1M156 220h1M144 221h2M147 221h1M146 223h1M156 223h1M141 224h1M143 225h2M156 226h1M139 227h1M142 227h1M140 229h2M155 229h1M136 230h1M139 231h1M155 232h1M134 233h1M137 233h1M136 235h1M155 235h1M131 236h1M627 236h3M134 237h1M625 237h2M630 237h2M155 238h1M625 238h1M631 238h1M129 239h1M133 239h1M624 239h1M632 239h1M624 240h1M628 240h1M632 240h1M131 241h1M154 241h1M624 241h1M632 241h1M126 242h1M625 242h1M631 242h1M130 243h1M625 243h2M630 243h2M154 244h1M627 244h3M128 245h1M127 247h1M154 247h1M120 249h1M154 250h1M95 253h5M153 253h1M93 254h2M100 254h2M92 255h1M102 255h1M91 256h1M103 256h1M153 256h1M90 257h1M104 257h1M90 258h1M104 258h1M89 259h1M105 259h1M153 259h1M89 260h1M105 260h1M89 261h1M97 261h1M105 261h1M89 262h1M105 262h1M153 262h1M89 263h1M105 263h1M90 264h1M104 264h1M90 265h1M104 265h1M152 265h1M91 266h1M103 266h1M92 267h1M102 267h1M93 268h2M100 268h2M152 268h1M95 269h5M152 271h1M152 274h1M630 276h3M152 277h1M631 277h2M630 278h1M632 278h1M626 279h2M629 279h1M151 280h1M625 280h1M628 280h1M624 281h1M629 281h1M624 282h1M629 282h1M151 283h1M625 283h1M628 283h1M626 284h2M151 286h1M631 286h1M80 287h1M625 287h2M630 287h1M79 288h2M627 288h1M630 288h1M78 289h1M80 289h1M151 289h1M627 289h1M630 289h1M80 290h1M626 290h1M630 290h1M80 291h1M626 291h1M630 291h1M80 292h1M150 292h1M625 292h1M630 292h1M80 293h1M625 293h8M80 294h1M630 294h1M78 295h5M150 295h1M150 298h1M150 301h1M149 304h1M149 307h1M145 313h1M132 323h6M136 324h2M135 325h1M137 325h1M134 326h1M137 326h1M133 327h1M137 327h1M132 328h1M137 328h1M124 329h5M131 329h1M123 330h1M129 330h2M122 331h1M130 331h1M121 332h1M131 332h1M121 333h1M131 333h1M121 334h1M131 334h1M121 335h1M131 335h1M371 335h5M121 336h1M131 336h1M371 336h1M122 337h1M130 337h1M371 337h1M123 338h1M129 338h1M371 338h1M124 339h5M371 339h4M375 340h1M375 341h1M371 342h1M375 342h1M372 343h3M211 440h3M221 440h3M210 441h1M214 441h1M220 441h1M224 441h1M209 442h1M215 442h1M219 442h1M225 442h1M209 443h1M215 443h1M219 443h1M225 443h1M209 444h1M215 444h1M219 444h1M225 444h1M210 445h1M216 445h1M218 445h1M224 445h1M211 446h1M216 446h1M218 446h1M223 446h1M216 447h1M218 447h1M216 448h1M218 448h1M217 449h1M217 450h1M217 451h1M217 452h1M217 453h1M217 454h1M217 455h1M217 456h1"/>
<path fill="none" stroke="#0ff" stroke-width="1" transform="translate(0,.5)" d="M222 126h1M220 127h1M219 128h1M218 129h1M216 130h2M215 131h1M214 132h1M213 133h1M211 134h1M210 135h1M208 136h2M206 138h1M205 139h1M203 140h2M202 141h1M201 142h1M199 143h2M198 144h1M197 145h1M195 146h2M194 147h1M193 148h1M192 149h1M190 150h2M189 151h1M188 152h1M186 153h2M185 154h1M184 155h1M182 156h2M181 157h1M180 158h1M178 159h2M177 160h1M176 161h1M175 162h1M173 163h2M172 164h1M171 165h1M169 166h2M168 167h1M167 168h1M165 169h2M164 170h1M163 171h1M162 172h1M160 173h2M159 174h1M158 175h1M156 176h2M155 177h1M154 178h1M152 179h2M151 180h1M150 181h1M148 182h2M147 183h1M146 184h1M145 185h1M143 186h2M142 187h1M141 188h1M139 189h2M138 190h1M137 191h1M135 192h2M134 193h1M133 194h1M133 195h1M133 196h1M133 197h1M133 198h2M134 199h1M134 200h1M134 201h1M134 202h1M134 203h1M134 204h1M135 205h1M134 206h2M135 207h1M135 208h1M135 209h1M135 210h1M135 211h1M135 212h1M136 213h1M135 214h2M136 215h1M135 216h2M136 217h1M136 218h1M136 219h1M136 220h2M137 221h1M136 222h2M137 223h1M136 224h2M137 225h1M136 226h2M138 227h1M137 228h2M138 229h1M137 230h2M138 231h1M137 232h2M138 233h1M137 234h1M139 234h1M139 235h1M138 236h2M139 237h1M138 238h2M139 239h1M138 240h2M139 241h1M138 242h1M140 242h1M140 243h1M138 244h1M140 244h1M140 245h1M139 246h2M140 247h1M139 248h2M141 249h1M139 250h1M141 250h1M141 251h1M139 252h1M141 252h1M141 253h1M140 254h2M141 255h1M140 256h1M142 256h1M142 257h1M140 258h1M142 258h1M142 259h1M140 260h1M142 260h1M142 261h1M140 262h1M142 262h1M143 263h1M141 264h1M143 264h1M143 265h1M141 266h1M143 266h1M143 267h1M141 268h1M143 268h1M143 269h1M141 270h1M143 270h1M144 271h1M142 272h1M144 272h1M144 273h1M142 274h1M144 274h1M144 275h1M142 276h1M144 276h1M144 277h1M142 278h1M145 278h1M145 279h1M142 280h1M145 280h1M145 281h1M143 282h1M145 282h1M145 283h1M143 284h1M145 284h1M146 285h1M143 286h1M146 286h1M146 287h1M143 288h1M146 288h1M146 289h1M143 290h1M146 290h1M146 291h1M144 292h1M147 292h1M147 293h1M144 294h1M147 294h1M147 295h1M144 296h1M147 296h1M147 297h1M144 298h1M147 298h1M147 299h1M145 300h1M148 300h1M148 301h1M145 302h1M148 302h1M148 303h1M148 304h1M148 305h1M148 306h1M149 308h1M149 309h1"/>
<path fill="none" stroke="#ff0" stroke-width="1" transform="translate(0,.5)" d="M354 61h1M358 61h1M362 61h1M355 62h1M357 62h1M359 62h1M361 62h1M363 62h1M356 63h1M360 63h1M364 63h1M368 63h1M356 64h1M360 64h1M364 64h1M367 64h2M356 65h1M360 65h1M364 65h1M366 65h1M368 65h1M356 66h1M360 66h1M364 66h2M368 66h1M356 67h1M360 67h1M364 67h1M368 67h1M356 68h1M360 68h1M364 68h1M368 68h1M356 69h1M360 69h1M364 69h1M368 69h1M356 70h1M360 70h1M364 70h1M368 70h1M356 71h1M360 71h1M364 71h1M368 71h1M356 72h1M360 72h1M364 72h1M368 72h1M356 73h1M360 73h1M364 73h1M368 73h1M356 74h1M360 74h1M365 74h1M367 74h1M356 75h1M360 75h1M366 75h1M365 76h1M367 76h1M364 77h1M368 77h1M157 87h1M164 87h3M156 88h2M163 88h1M167 88h1M155 89h1M157 89h1M163 89h1M167 89h1M157 90h1M163 90h1M167 90h1M157 91h1M163 91h1M167 91h1M157 92h1M163 92h1M167 92h1M200 92h1M157 93h1M163 93h1M167 93h1M200 93h1M157 94h1M163 94h1M167 94h1M196 94h9M155 95h5M164 95h3M200 95h1M200 96h1M200 97h1M200 98h1M204 98h3M200 99h1M203 99h1M207 99h1M200 100h3M208 100h1M200 101h1M208 101h1M200 102h1M208 102h1M200 103h1M207 103h1M200 104h1M206 104h1M200 105h1M206 105h1M200 106h1M206 106h1M207 107h1M208 108h1M626 116h1M629 116h1M632 116h1M625 117h2M628 117h2M631 117h1M625 118h1M627 118h2M630 118h2M624 119h1M627 119h1M630 119h1M626 121h1M629 121h1M632 121h1M213 122h1M625 122h2M628 122h2M631 122h1M625 123h1M627 123h2M630 123h2M624 124h1M627 124h1M630 124h1M217 126h1M220 126h1M161 155h1M625 156h1M632 156h1M159 157h1M626 157h6M627 158h1M630 158h1M157 159h1M627 159h1M630 159h1M627 160h1M630 160h1M627 161h1M630 161h1M627 162h1M630 162h1M626 163h6M625 164h1M632 164h1M624 196h1M626 196h1M628 196h1M625 197h1M627 197h1M629 197h1M625 198h1M627 198h1M629 198h1M625 199h1M627 199h1M629 199h1M625 200h1M627 200h1M629 200h1M625 201h1M627 201h1M629 201h1M625 202h1M627 202h1M629 202h1M632 202h1M625 203h1M627 203h1M629 203h1M632 203h1M630 204h2M24 209h1M30 209h1M34 209h3M23 210h2M30 210h2M33 210h1M37 210h1M22 211h1M24 211h1M30 211h1M32 211h1M38 211h1M24 212h1M29 212h1M31 212h1M38 212h1M24 213h1M28 213h1M32 213h1M38 213h1M24 214h1M28 214h1M33 214h1M37 214h1M24 215h1M28 215h1M34 215h3M24 216h1M28 216h1M35 216h1M24 217h1M28 217h1M36 217h1M25 218h1M27 218h1M37 218h1M26 219h1M38 219h1M26 220h1M38 220h1M26 221h1M38 221h1M26 222h1M38 222h1M26 223h1M38 223h1M37 224h1M36 225h1M124 245h1M124 246h1M124 247h1M125 248h1M125 249h1M402 271h3M401 272h1M405 272h1M401 273h1M401 274h1M401 275h4M401 276h1M405 276h1M401 277h1M405 277h1M401 278h1M405 278h1M402 279h3M627 296h1M625 297h5M627 298h1M627 299h1M629 299h2M627 300h2M631 300h1M627 301h1M631 301h1M627 302h1M630 302h1M627 303h1M630 303h1M145 304h1M631 304h1M146 306h1M148 308h1M149 310h1M141 372h3M140 373h1M144 373h1M144 374h1M144 375h1M143 376h1M142 377h1M141 378h1M140 379h1M140 380h5M318 423h1M330 423h1M319 424h1M329 424h1M319 425h1M329 425h1M320 426h2M327 426h2M322 427h5M320 428h2M327 428h2M319 429h1M329 429h1M319 430h1M329 430h1M318 431h1M330 431h1M318 432h1M330 432h1M318 433h1M330 433h1M318 434h1M330 434h1M318 435h1M330 435h1M319 436h1M329 436h1M319 437h1M329 437h1M320 438h2M327 438h2M322 439h5"/>
<path fill="none" stroke="#00f" stroke-width="1" transform="translate(0,.5)" d="M146 39h1M150 39h1M154 39h1M147 40h1M149 40h1M151 40h1M153 40h1M155 40h1M148 41h1M152 41h1M156 41h1M148 42h1M152 42h1M156 42h1M148 43h1M152 43h1M156 43h1M148 44h1M152 44h1M156 44h1M148 45h1M152 45h1M156 45h1M148 46h1M152 46h1M156 46h1M148 47h1M152 47h1M156 47h1M148 48h1M152 48h1M156 48h1M148 49h1M152 49h1M156 49h1M148 50h1M152 50h1M156 50h1M161 50h1M148 51h1M152 51h1M156 51h1M160 51h3M148 52h1M152 52h1M156 52h1M161 52h1M148 53h1M152 53h1M156 53h1M161 53h1M157 54h1M160 54h1M158 55h2M215 88h1M220 88h3M227 88h1M215 89h1M219 89h1M223 89h1M227 89h1M215 90h1M219 90h1M223 90h1M227 90h1M215 91h1M219 91h1M223 91h1M227 91h1M215 92h1M220 92h3M227 92h1M216 93h1M226 93h1M216 94h1M226 94h1M217 95h2M224 95h2M219 96h5M221 97h1M221 98h1M335 98h3M221 99h1M334 99h1M338 99h1M217 100h9M334 100h1M338 100h1M221 101h1M334 101h1M338 101h1M221 102h1M335 102h3M221 103h1M334 103h1M338 103h1M221 104h1M334 104h1M338 104h1M334 105h1M338 105h1M335 106h3M222 121h1M625 136h1M631 136h1M626 137h1M630 137h1M627 138h3M626 139h1M630 139h1M625 140h1M631 140h1M625 141h1M631 141h1M625 142h1M631 142h1M626 143h1M630 143h1M627 144h3M101 175h1M107 175h1M113 175h1M101 176h1M107 176h1M113 176h1M627 176h3M100 177h3M105 177h5M112 177h3M626 177h1M630 177h1M101 178h1M107 178h1M113 178h1M625 178h1M631 178h1M101 179h1M107 179h1M113 179h1M625 179h1M631 179h1M102 180h1M107 180h1M112 180h1M625 180h1M631 180h1M102 181h1M107 181h1M112 181h1M626 181h1M630 181h1M103 182h2M107 182h1M110 182h2M624 182h1M626 182h1M630 182h1M105 183h5M625 183h1M631 183h1M107 184h1M632 184h1M107 185h1M107 186h1M103 187h9M107 188h1M107 189h1M107 190h1M107 191h1M129 192h1M71 199h1M78 199h3M70 200h2M77 200h1M81 200h1M69 201h1M71 201h1M81 201h1M71 202h1M81 202h1M71 203h1M80 203h1M71 204h1M79 204h1M71 205h1M78 205h1M71 206h1M77 206h1M69 207h5M77 207h5M630 216h3M631 217h2M630 218h1M632 218h1M625 219h1M629 219h1M626 220h1M628 220h1M627 221h1M626 222h1M628 222h1M625 223h1M629 223h1M624 224h1M626 246h3M625 247h1M629 247h2M626 248h1M630 248h1M627 249h1M631 249h1M627 250h1M631 250h1M627 251h1M631 251h1M626 252h1M630 252h1M625 253h1M629 253h2M446 254h5M626 254h3M443 255h3M451 255h1M442 256h1M452 256h3M441 257h1M451 257h1M455 257h1M440 258h1M450 258h1M456 258h1M450 259h1M456 259h1M442 260h3M450 260h1M456 260h1M441 261h1M445 261h1M451 261h1M455 261h1M440 262h1M446 262h1M452 262h3M440 263h1M446 263h1M440 264h1M446 264h1M456 264h1M441 265h1M445 265h1M455 265h1M442 266h3M454 266h1M445 267h1M451 267h3M446 268h5M113 307h5M141 307h1M112 308h1M118 308h2M111 309h1M120 309h1M112 310h1M121 310h1M113 311h1M122 311h1M114 312h1M122 312h1M114 313h1M123 313h1M115 314h1M123 314h1M115 315h1M123 315h1M115 316h1M123 316h1M625 316h1M628 316h1M631 316h1M114 317h1M123 317h1M624 317h9M114 318h1M122 318h1M625 318h1M628 318h1M631 318h1M113 319h1M122 319h1M626 319h1M628 319h1M630 319h1M112 320h1M121 320h1M627 320h3M111 321h1M120 321h1M628 321h1M112 322h1M118 322h2M626 322h5M113 323h5M628 323h1M628 324h1M625 326h1M628 326h1M631 326h1M625 327h1M627 327h1M629 327h1M631 327h1M625 328h1M628 328h1M631 328h1M626 329h1M630 329h1M627 330h3M628 331h1M626 332h5M628 333h1M628 334h1M315 383h1M318 383h1M315 384h1M318 384h1M315 385h1M318 385h1M315 386h1M318 386h1M315 387h5M318 388h1M318 389h1M318 390h1M318 391h1M108 401h1M124 401h1M109 402h1M123 402h1M110 403h1M122 403h1M111 404h1M121 404h1M111 405h1M121 405h1M112 406h1M120 406h1M112 407h1M120 407h1M112 408h1M120 408h1M108 409h17M112 410h1M120 410h1M112 411h1M120 411h1M112 412h1M120 412h1M111 413h1M121 413h1M111 414h1M121 414h1M110 415h1M122 415h1M109 416h1M123 416h1M108 417h1M124 417h1"/>
<path fill="none" stroke="#008080" stroke-width="1" transform="translate(0,.5)" d="M374 275h5M353 276h1M373 276h1M379 276h1M372 277h1M380 277h1M371 278h1M381 278h1M370 279h1M382 279h1M370 280h1M382 280h1M370 281h1M382 281h1M370 282h1M382 282h1M370 283h1M382 283h1M371 284h1M381 284h1M372 285h1M380 285h1M372 286h1M380 286h1M370 287h3M380 287h3M369 288h1M372 288h1M380 288h1M383 288h1M368 289h1M372 289h1M380 289h1M384 289h1M369 290h1M371 290h1M381 290h1M383 290h1M370 291h1M382 291h1M627 336h3M626 337h1M630 337h1M625 338h1M631 338h1M625 339h1M631 339h1M625 340h1M631 340h1M626 341h1M630 341h1M625 342h2M630 342h2M624 343h1M626 343h1M630 343h1M632 343h1M625 344h1M631 344h1"/>
</svg>
<div class="t">
<div class="l" style="top:7px"><span style="color:#fff">Astrolog&nbsp;5.40</span></div>
<div class="l" style="top:17px"><span style="color:#c0c0c0">guest</span></div>
<div class="l" style="top:27px"><span style="color:#c0c0c0">Mon&nbsp;January&nbsp;17,&nbsp;1983</span></div>
<div class="l" style="top:37px"><span style="color:#c0c0c0">&nbsp;6:25am&nbsp;(ST&nbsp;+8:00&nbsp;GMT)</span></div>
<div class="l" style="top:47px"><span style="color:#c0c0c0">Taipei</span></div>
<div class="l" style="top:57px"><span style="color:#c0c0c0">121°30E&nbsp;25°03N</span></div>
<div class="l" style="top:67px"><span style="color:#c0c0c0">Placidus&nbsp;houses.</span></div>
<div class="l" style="top:77px"><span style="color:#c0c0c0">Tropical,&nbsp;Geocentric.</span></div>
<div class="l" style="top:87px"><span style="color:#c0c0c0">Julian&nbsp;Day&nbsp;=&nbsp;2445351.4340</span></div>
<div class="l" style="top:107px"><span style="color:#f00">&nbsp;1st&nbsp;house:</span><span style="color:#ff0">&nbsp;21Cap04</span></div>
<div class="l" style="top:117px"><span style="color:#ff0">&nbsp;2nd&nbsp;house:</span><span style="color:#0f0">&nbsp;27Aqu25</span></div>
<div class="l" style="top:127px"><span style="color:#0f0">&nbsp;3rd&nbsp;house:</span><span style="color:#f00">&nbsp;&nbsp;4Ari08</span></div>
<div class="l" style="top:137px"><span style="color:#00f">&nbsp;4th&nbsp;house:</span><span style="color:#ff0">&nbsp;&nbsp;5Tau51</span></div>
<div class="l" style="top:147px"><span style="color:#f00">&nbsp;5th&nbsp;house:</span><span style="color:#0f0">&nbsp;&nbsp;2Gem15</span></div>
<div class="l" style="top:157px"><span style="color:#ff0">&nbsp;6th&nbsp;house:</span><span style="color:#0f0">&nbsp;26Gem07</span></div>
<div class="l" style="top:167px"><span style="color:#0f0">&nbsp;7th&nbsp;house:</span><span style="color:#00f">&nbsp;21Can04</span></div>
<div class="l" style="top:177px"><span style="color:#00f">&nbsp;8th&nbsp;house:</span><span style="color:#f00">&nbsp;27Leo25</span></div>
<div class="l" style="top:187px"><span style="color:#f00">&nbsp;9th&nbsp;house:</span><span style="color:#0f0">&nbsp;&nbsp;4Lib08</span></div>
<div class="l" style="top:197px"><span style="color:#ff0">10th&nbsp;house:</span><span style="color:#00f">&nbsp;&nbsp;5Sco51</span></div>
<div class="l" style="top:207px"><span style="color:#0f0">11th&nbsp;house:</span><span style="color:#f00">&nbsp;&nbsp;2Sag15</span></div>
<div class="l" style="top:217px"><span style="color:#00f">12th&nbsp;house:</span><span style="color:#f00">&nbsp;26Sag07</span></div>
<div class="l" style="top:237px"><span style="color:#f00">&nbsp;Sun:</span><span style="color:#ff0">&nbsp;26Cap14</span><span style="color:#fff">&nbsp;</span><span style="color:#c0c0c0">&nbsp;-&nbsp;0°00'</span></div>
<div class="l" style="top:247px"><span style="color:#00f">Moon:</span><span style="color:#0f0">&nbsp;25Aqu42</span><span style="color:#fff">&nbsp;</span><span style="color:#c0c0c0">&nbsp;-&nbsp;4°07'</span></div>
<div class="l" style="top:257px"><span style="color:#0f0">Merc:</span><span style="color:#ff0">&nbsp;24Cap23</span><span style="color:#fff">R</span><span style="color:#c0c0c0">&nbsp;+&nbsp;3°13'</span></div>
<div class="l" style="top:267px"><span style="color:#0f0">Venu:</span><span style="color:#0f0">&nbsp;14Aqu01</span><span style="color:#fff">&nbsp;</span><span style="color:#c0c0c0">&nbsp;-&nbsp;1°32'</span></div>
<div class="l" style="top:277px"><span style="color:#f00">Mars:</span><span style="color:#0f0">&nbsp;29Aqu32</span><span style="color:#fff">&nbsp;</span><span style="color:#c0c0c0">&nbsp;-&nbsp;1°01'</span></div>
<div class="l" style="top:287px"><span style="color:#f00">Jupi:</span><span style="color:#f00">&nbsp;&nbsp;4Sag08</span><span style="color:#fff">&nbsp;</span><span style="color:#c0c0c0">&nbsp;+&nbsp;0°50'</span></div>
<div class="l" style="top:297px"><span style="color:#ff0">Satu:</span><span style="color:#00f">&nbsp;&nbsp;3Sco50</span><span style="color:#fff">&nbsp;</span><span style="color:#c0c0c0">&nbsp;+&nbsp;2°28'</span></div>
<div class="l" style="top:307px"><span style="color:#0f0">Uran:</span><span style="color:#f00">&nbsp;&nbsp;7Sag44</span><span style="color:#fff">&nbsp;</span><span style="color:#c0c0c0">&nbsp;+&nbsp;0°07'</span></div>
<div class="l" style="top:317px"><span style="color:#00f">Nept:</span><span style="color:#f00">&nbsp;27Sag49</span><span style="color:#fff">&nbsp;</span><span style="color:#c0c0c0">&nbsp;+&nbsp;1°13'</span></div>
<div class="l" style="top:327px"><span style="color:#00f">Plut:</span><span style="color:#0f0">&nbsp;29Lib28</span><span style="color:#fff">&nbsp;</span><span style="color:#c0c0c0">&nbsp;+16°59'</span></div>
<div class="l" style="top:337px"><span style="color:#008080">Node:</span><span style="color:#00f">&nbsp;&nbsp;3Can01</span><span style="color:#fff">R</span><span style="color:#c0c0c0">&nbsp;+&nbsp;0°00'</span></div>
<div class="l" style="top:357px"><span style="color:#c0c0c0">Fire:&nbsp;3,&nbsp;Earth:&nbsp;2,</span></div>
<div class="l" style="top:367px"><span style="color:#c0c0c0">Air&nbsp;:&nbsp;4,&nbsp;Water:&nbsp;2</span></div>
<div class="l" style="top:377px"><span style="color:#c0c0c0">Car:&nbsp;4,&nbsp;Fix:&nbsp;4,&nbsp;Mut:&nbsp;3</span></div>
<div class="l" style="top:387px"><span style="color:#c0c0c0">Yang:&nbsp;7,&nbsp;Yin:&nbsp;4</span></div>
<div class="l" style="top:397px"><span style="color:#c0c0c0">M:&nbsp;5,&nbsp;N:&nbsp;6,&nbsp;A:&nbsp;8,&nbsp;D:&nbsp;3</span></div>
<div class="l" style="top:407px"><span style="color:#c0c0c0">Ang:&nbsp;4,&nbsp;Suc:&nbsp;3,&nbsp;Cad:&nbsp;4</span></div>
<div class="l" style="top:417px"><span style="color:#c0c0c0">Learn:&nbsp;1,&nbsp;Share:&nbsp;10</span></div>
</div>
</body></html>
